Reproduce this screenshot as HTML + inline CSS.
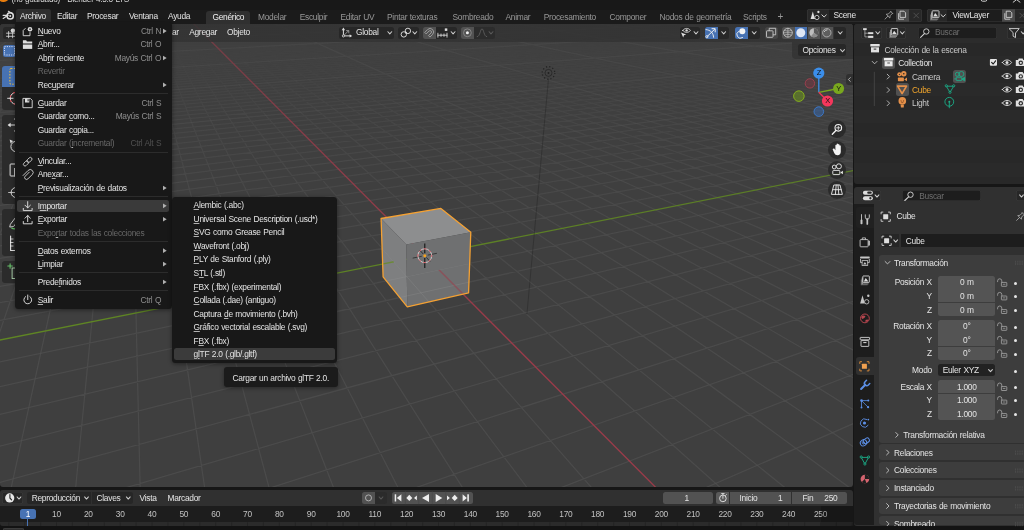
<!DOCTYPE html>
<html><head><meta charset="utf-8"><title>Blender</title>
<style>
html,body{margin:0;padding:0;background:#161616}
body{width:1024px;height:530px;overflow:hidden;position:relative;font-family:"Liberation Sans",sans-serif;font-size:8.4px;letter-spacing:-0.28px;word-spacing:0.5px;color:#e4e4e4}
#w{position:absolute;left:0;top:0;width:1024px;height:530px;will-change:transform}
.a{position:absolute}
.t{position:absolute;white-space:nowrap;line-height:10px;height:10px}
.d{color:#686868}
.s{color:#8e8e8e}
u{text-decoration:underline;text-decoration-thickness:0.6px;text-underline-offset:1.2px;text-decoration-color:rgba(228,228,228,0.75)}
svg{position:absolute;overflow:visible}
</style></head><body><div id="w">
<div class="a" style="left:0.00px;top:0.00px;width:1024.00px;height:24.00px;background:#181818;"></div><div class="a" style="left:0.00px;top:10.00px;width:1024.00px;height:14.00px;background:#1b1b1b;"></div><div class="a" style="left:0;top:0;width:1024px;height:6px;overflow:hidden"><span class="t" style="left:11.6px;top:-4.7px;font-size:8.2px;color:#d4d4d4">(no guardado) - Blender 4.5.3 LTS</span><div class="a" style="left:-2px;top:-8.3px;width:10.6px;height:10.6px;border-radius:5.3px;background:#e87d0d"></div></div><div class="a" style="left:16.25px;top:9.25px;width:35.00px;height:12.65px;background:#2e2e2e;border-radius:2.5px 2.5px 0 0;"></div><span class="t" style="left:20.00px;top:10.55px;">Archivo</span><span class="t" style="left:57.00px;top:10.55px;">Editar</span><span class="t" style="left:87.00px;top:10.55px;">Procesar</span><span class="t" style="left:129.00px;top:10.55px;">Ventana</span><span class="t" style="left:168.00px;top:10.55px;">Ayuda</span><div class="a" style="left:206.00px;top:10.50px;width:44.00px;height:14.00px;background:#303030;border-radius:3px 3px 0 0;"></div><span class="t" style="left:212.50px;top:11.55px;color:#f0f0f0">Genérico</span><span class="t" style="left:258.00px;top:11.55px;color:#989898">Modelar</span><span class="t" style="left:299.75px;top:11.55px;color:#989898">Esculpir</span><span class="t" style="left:340.50px;top:11.55px;color:#989898">Editar UV</span><span class="t" style="left:387.00px;top:11.55px;color:#989898">Pintar texturas</span><span class="t" style="left:452.50px;top:11.55px;color:#989898">Sombreado</span><span class="t" style="left:505.50px;top:11.55px;color:#989898">Animar</span><span class="t" style="left:543.75px;top:11.55px;color:#989898">Procesamiento</span><span class="t" style="left:609.50px;top:11.55px;color:#989898">Componer</span><span class="t" style="left:659.50px;top:11.55px;color:#989898">Nodos de geometría</span><span class="t" style="left:743.00px;top:11.55px;color:#989898">Scripts</span><span class="t" style="left:777.50px;top:11.75px;color:#989898;font-size:10px">+</span><div class="a" style="left:806.75px;top:9.00px;width:22.25px;height:12.50px;background:#282828;border-radius:2.5px 0 0 2.5px;"></div><div class="a" style="left:829.40px;top:9.00px;width:65.80px;height:12.50px;background:#1d1d1d;"></div><span class="t" style="left:833.50px;top:10.15px;">Scene</span><div class="a" style="left:895.60px;top:9.00px;width:13.20px;height:12.50px;background:#4a4a4a;"></div><div class="a" style="left:909.20px;top:9.00px;width:12.55px;height:12.50px;background:#282828;border-radius:0 2.5px 2.5px 0;"></div><div class="a" style="left:926.75px;top:9.00px;width:20.25px;height:12.50px;background:#282828;border-radius:2.5px 0 0 2.5px;"></div><div class="a" style="left:947.40px;top:9.00px;width:54.00px;height:12.50px;background:#1d1d1d;"></div><span class="t" style="left:952.50px;top:10.15px;">ViewLayer</span><div class="a" style="left:1001.80px;top:9.00px;width:13.20px;height:12.50px;background:#4a4a4a;"></div><div class="a" style="left:1015.40px;top:9.00px;width:14.60px;height:12.50px;background:#282828;"></div><div class="a" style="left:806.75px;top:9.00px;width:115.00px;height:12.50px;background:transparent;border-radius:2.5px;box-shadow:inset 0 0 0 0.6px #3a3a3a;"></div><div class="a" style="left:926.75px;top:9.00px;width:103.25px;height:12.50px;background:transparent;border-radius:2.5px;box-shadow:inset 0 0 0 0.6px #3a3a3a;"></div><div class="a" style="left:0;top:24px;width:852.7px;height:463px;background:#3f3f3f;border-radius:3px;overflow:hidden"><svg style="left:0;top:0" width="852.7" height="463" viewBox="0 24 852.7 463"><defs><linearGradient id="gf" x1="0" y1="24" x2="0" y2="487" gradientUnits="userSpaceOnUse"><stop offset="0.04" stop-color="#fff" stop-opacity="0.05"/><stop offset="0.1" stop-color="#fff" stop-opacity="0.3"/><stop offset="0.2" stop-color="#fff" stop-opacity="0.6"/><stop offset="0.4" stop-color="#fff" stop-opacity="0.85"/><stop offset="0.7" stop-color="#fff" stop-opacity="1"/></linearGradient><mask id="gm" maskUnits="userSpaceOnUse" x="0" y="24" width="860" height="470"><rect x="0" y="24" width="860" height="470" fill="url(#gf)"/></mask><linearGradient id="gf2" x1="0" y1="24" x2="0" y2="487" gradientUnits="userSpaceOnUse"><stop offset="0" stop-color="#fff" stop-opacity="0.55"/><stop offset="0.3" stop-color="#fff" stop-opacity="0.85"/><stop offset="0.6" stop-color="#fff" stop-opacity="1"/></linearGradient><mask id="gm2" maskUnits="userSpaceOnUse" x="0" y="24" width="860" height="470"><rect x="0" y="24" width="860" height="470" fill="url(#gf2)"/></mask></defs><g mask="url(#gm)" fill="none"><path d="M-918.0 28.0L657.1 -11.1M-893.6 26.9L-131642.5 8927.3M-929.3 28.8L659.6 -10.9M-880.4 26.6L-130551.7 8927.3M-940.9 29.5L662.2 -10.8M-867.4 26.3L-129460.9 8927.3M-952.8 30.3L664.8 -10.6M-854.4 26.0L-128370.2 8927.3M-964.9 31.2L667.4 -10.5M-841.6 25.6L-127279.4 8927.3M-977.3 32.0L670.1 -10.3M-828.9 25.3L-126188.6 8927.3M-989.9 32.9L672.8 -10.1M-816.3 25.0L-125097.9 8927.3M-1002.9 33.7L675.5 -10.0M-803.8 24.7L-124007.1 8927.3M-1016.1 34.6L678.2 -9.8M-791.4 24.4L-122916.3 8927.3M-1043.6 36.5L683.7 -9.5M-767.1 23.8L-120734.8 8927.3M-1057.9 37.4L686.5 -9.3M-755.0 23.5L-119644.0 8927.3M-1072.4 38.4L689.4 -9.2M-743.1 23.2L-118553.2 8927.3M-1087.4 39.4L692.2 -9.0M-731.3 22.9L-117462.5 8927.3M-1102.7 40.5L695.1 -8.8M-719.6 22.6L-116371.7 8927.3M-1118.5 41.5L698.1 -8.6M-707.9 22.3L-115280.9 8927.3M-1134.6 42.6L701.0 -8.5M-696.4 22.1L-114190.2 8927.3M-1151.1 43.7L704.0 -8.3M-685.0 21.8L-113099.4 8927.3M-1168.1 44.9L707.0 -8.1M-673.7 21.5L-112008.6 8927.3M-1203.5 47.3L713.2 -7.7M-651.4 21.0L-109827.1 8927.3M-1221.9 48.5L716.3 -7.6M-640.3 20.7L-108736.3 8927.3M-1240.9 49.8L719.4 -7.4M-629.4 20.4L-107645.6 8927.3M-1260.4 51.1L722.6 -7.2M-618.6 20.1L-106554.8 8927.3M-1280.4 52.5L725.8 -7.0M-607.8 19.9L-105464.0 8927.3M-1301.0 53.9L729.1 -6.8M-597.2 19.6L-104373.3 8927.3M-1322.3 55.3L732.4 -6.6M-586.6 19.4L-103282.5 8927.3M-1344.2 56.8L735.7 -6.4M-576.1 19.1L-102191.7 8927.3M-1366.7 58.3L739.1 -6.2M-565.7 18.8L-101101.0 8927.3M-1414.0 61.5L745.9 -5.8M-545.2 18.3L-98919.4 8927.3M-1438.7 63.2L749.4 -5.6M-535.1 18.1L-97828.6 8927.3M-1464.3 64.9L752.9 -5.4M-525.0 17.8L-96737.9 8927.3M-1490.7 66.7L756.4 -5.2M-515.0 17.6L-95647.1 8927.3M-1518.0 68.5L760.0 -5.0M-505.1 17.3L-94556.3 8927.3M-1546.3 70.4L763.7 -4.7M-495.3 17.1L-93465.6 8927.3M-1575.5 72.4L767.4 -4.5M-485.6 16.9L-92374.8 8927.3M-1605.8 74.4L771.1 -4.3M-475.9 16.6L-91284.0 8927.3M-1637.2 76.6L774.8 -4.1M-466.4 16.4L-90193.3 8927.3M-1703.5 81.0L782.5 -3.6M-447.4 15.9L-88011.7 8927.3M-1738.5 83.4L786.4 -3.4M-438.1 15.7L-86921.0 8927.3M-1774.9 85.9L790.4 -3.2M-428.8 15.5L-85830.2 8927.3M-1812.8 88.4L794.4 -2.9M-419.6 15.2L-84739.4 8927.3M-1852.2 91.1L798.4 -2.7M-410.5 15.0L-83648.7 8927.3M-1893.2 93.8L802.5 -2.4M-401.4 14.8L-82557.9 8927.3M-1936.0 96.7L806.6 -2.2M-392.4 14.6L-81467.1 8927.3M-1980.6 99.7L810.8 -1.9M-383.5 14.4L-80376.4 8927.3M-2027.2 102.9L815.1 -1.7M-374.6 14.1L-79285.6 8927.3M-2126.9 109.6L823.7 -1.2M-357.1 13.7L-77104.1 8927.3M-2180.2 113.2L828.1 -0.9M-348.5 13.5L-76013.3 8927.3M-2236.2 117.0L832.6 -0.6M-339.9 13.3L-74922.5 8927.3M-2294.9 121.0L837.1 -0.4M-331.3 13.1L-73831.7 8927.3M-2356.7 125.1L841.7 -0.1M-322.9 12.9L-72741.0 8927.3M-2421.6 129.5L846.4 0.2M-314.5 12.6L-71650.2 8927.3M-2490.0 134.1L851.1 0.5M-306.1 12.4L-70559.4 8927.3M-2562.3 139.0L855.8 0.7M-297.9 12.2L-69468.7 8927.3M-2638.6 144.2L860.6 1.0M-289.7 12.0L-68377.9 8927.3M-2805.0 155.4L870.5 1.6M-273.4 11.6L-66196.4 8927.3M-2895.9 161.5L875.5 1.9M-265.4 11.4L-65105.6 8927.3M-2992.7 168.1L880.6 2.2M-257.4 11.2L-64014.8 8927.3M-3095.9 175.0L885.8 2.5M-249.5 11.0L-62924.1 8927.3M-3206.1 182.5L891.0 2.8M-241.6 10.9L-61833.3 8927.3M-3324.1 190.4L896.3 3.2M-233.8 10.7L-60742.5 8927.3M-3450.8 199.0L901.7 3.5M-226.1 10.5L-59651.8 8927.3M-3587.1 208.2L907.1 3.8M-218.4 10.3L-58561.0 8927.3M-3734.2 218.1L912.7 4.1M-210.7 10.1L-57470.2 8927.3M-4066.5 240.6L924.0 4.8M-195.6 9.7L-55288.7 8927.3M-4255.0 253.3L929.8 5.1M-188.1 9.5L-54197.9 8927.3M-4461.3 267.2L935.6 5.5M-180.7 9.4L-53107.1 8927.3M-4688.0 282.5L941.6 5.8M-173.3 9.2L-52016.4 8927.3M-4938.2 299.4L947.6 6.2M-166.0 9.0L-50925.6 8927.3M-5215.8 318.2L953.7 6.6M-158.8 8.8L-49834.8 8927.3M-5525.6 339.1L959.9 6.9M-151.5 8.6L-48744.1 8927.3M-5873.6 362.6L966.2 7.3M-144.4 8.5L-47653.3 8927.3M-6267.2 389.1L972.7 7.7M-137.2 8.3L-46562.5 8927.3M-7232.7 454.3L985.8 8.5M-123.1 7.9L-44381.0 8927.3M-7833.7 494.9L992.5 8.9M-116.2 7.8L-43290.2 8927.3M-8541.7 542.7L999.3 9.3M-109.2 7.6L-42199.5 8927.3M-9387.7 599.8L1006.2 9.7M-102.4 7.4L-41108.7 8927.3M-10416.8 669.3L1013.3 10.1M-95.5 7.3L-40017.9 8927.3M-11695.5 755.6L1020.4 10.5M-88.7 7.1L-38927.2 8927.3M-13327.1 865.8L1027.7 11.0M-82.0 6.9L-37836.4 8927.3M-15481.2 1011.2L1035.0 11.4M-75.3 6.8L-36745.6 8927.3M-18456.4 1212.1L1042.6 11.9M-68.6 6.6L-35654.9 8927.3M-29905.8 1985.1L1057.9 12.8M-55.5 6.3L-33473.3 8927.3M-43276.2 2887.7L1065.8 13.2M-48.9 6.1L-32382.6 8927.3M-78103.2 5239.0L1073.9 13.7M-42.4 5.9L-31291.8 8927.3M-131537.6 8927.3L1082.0 14.2M-36.0 5.8L-30201.0 8927.3M-129085.3 8927.3L1090.3 14.7M-29.6 5.6L-29110.2 8927.3M-126633.0 8927.3L1098.8 15.2M-23.3 5.5L-28019.5 8927.3M-124180.7 8927.3L1107.4 15.7M-16.9 5.3L-26928.7 8927.3M-121728.5 8927.3L1116.2 16.2M-10.7 5.2L-25837.9 8927.3M-119276.2 8927.3L1125.1 16.8M-4.4 5.0L-24747.2 8927.3M-114371.6 8927.3L1143.4 17.9M7.9 4.7L-22565.6 8927.3M-111919.3 8927.3L1152.8 18.4M14.0 4.6L-21474.9 8927.3M-109467.0 8927.3L1162.4 19.0M20.1 4.4L-20384.1 8927.3M-107014.7 8927.3L1172.2 19.6M26.1 4.3L-19293.3 8927.3M-104562.5 8927.3L1182.1 20.2M32.1 4.1L-18202.6 8927.3M-102110.2 8927.3L1192.3 20.8M38.1 4.0L-17111.8 8927.3M-99657.9 8927.3L1202.6 21.4M44.0 3.8L-16021.0 8927.3M-97205.6 8927.3L1213.2 22.0M49.9 3.7L-14930.3 8927.3M-94753.3 8927.3L1223.9 22.6M55.8 3.5L-13839.5 8927.3M-89848.8 8927.3L1246.1 24.0M67.4 3.2L-11658.0 8927.3M-87396.5 8927.3L1257.5 24.6M73.1 3.1L-10567.2 8927.3M-84944.2 8927.3L1269.2 25.3M78.8 3.0L-9476.4 8927.3M-82491.9 8927.3L1281.1 26.1M84.5 2.8L-8385.6 8927.3M-80039.6 8927.3L1293.3 26.8M90.1 2.7L-7294.9 8927.3M-77587.3 8927.3L1305.7 27.5M95.7 2.5L-6204.1 8927.3M-75135.0 8927.3L1318.4 28.3M101.3 2.4L-5113.3 8927.3M-72682.8 8927.3L1331.3 29.0M106.8 2.3L-4022.6 8927.3M-70230.5 8927.3L1344.6 29.8M112.3 2.1L-2931.8 8927.3M-65325.9 8927.3L1371.9 31.5M123.2 1.9L-750.3 8927.3M-62873.6 8927.3L1386.1 32.3M128.6 1.7L340.5 8927.3M-60421.3 8927.3L1400.6 33.2M134.0 1.6L1431.3 8927.3M-57969.0 8927.3L1415.4 34.0M139.3 1.5L2522.0 8927.3M-55516.8 8927.3L1430.6 34.9M144.6 1.3L3612.8 8927.3M-53064.5 8927.3L1446.1 35.9M149.9 1.2L4703.6 8927.3M-50612.2 8927.3L1462.0 36.8M155.2 1.1L5794.3 8927.3M-48159.9 8927.3L1478.3 37.8M160.4 0.9L6885.1 8927.3M-45707.6 8927.3L1495.0 38.8M165.6 0.8L7975.9 8927.3M-40803.0 8927.3L1529.7 40.8M175.8 0.6L10157.4 8927.3M-38350.8 8927.3L1547.7 41.9M180.9 0.4L11248.2 8927.3M-35898.5 8927.3L1566.1 43.0M186.0 0.3L12339.0 8927.3M-33446.2 8927.3L1585.1 44.1M191.0 0.2L13429.7 8927.3M-30993.9 8927.3L1604.5 45.3M196.0 0.1L14520.5 8927.3M-28541.6 8927.3L1624.5 46.5M201.0 -0.1L15611.3 8927.3M-26089.3 8927.3L1645.1 47.7M205.9 -0.2L16702.0 8927.3M-23637.0 8927.3L1666.2 49.0M210.9 -0.3L17792.8 8927.3M-21184.8 8927.3L1687.9 50.3M215.8 -0.4L18883.6 8927.3M-16280.2 8927.3L1733.2 53.0M225.5 -0.7L21065.1 8927.3M-13827.9 8927.3L1756.8 54.4M230.3 -0.8L22155.9 8927.3M-11375.6 8927.3L1781.2 55.8M235.0 -0.9L23246.6 8927.3M-8923.3 8927.3L1806.3 57.3M239.8 -1.0L24337.4 8927.3M-6471.0 8927.3L1832.1 58.8M244.5 -1.1L25428.2 8927.3M-4018.8 8927.3L1858.8 60.4M249.2 -1.2L26518.9 8927.3M-1566.5 8927.3L1886.4 62.1M253.9 -1.4L27609.7 8927.3M885.8 8927.3L1914.8 63.8M258.6 -1.5L28700.5 8927.3M3338.1 8927.3L1944.1 65.5M263.2 -1.6L29791.2 8927.3M8242.7 8927.3L2005.8 69.2M272.3 -1.8L31972.8 8927.3M10695.0 8927.3L2038.3 71.1M276.9 -1.9L33063.5 8927.3M13147.2 8927.3L2071.8 73.1M281.4 -2.0L34154.3 8927.3M15599.5 8927.3L2106.6 75.2M285.9 -2.1L35245.1 8927.3M18051.8 8927.3L2142.7 77.3M290.4 -2.3L36335.9 8927.3M20504.1 8927.3L2180.1 79.5M294.8 -2.4L37426.6 8927.3M22956.4 8927.3L2218.9 81.9M299.3 -2.5L38517.4 8927.3M25408.7 8927.3L2259.2 84.3M303.7 -2.6L39608.2 8927.3M27861.0 8927.3L2301.1 86.7M308.0 -2.7L40698.9 8927.3M32765.5 8927.3L2390.0 92.0M316.7 -2.9L42880.5 8927.3M35217.8 8927.3L2437.2 94.8M321.0 -3.0L43971.2 8927.3M37670.1 8927.3L2486.4 97.8M325.3 -3.1L45062.0 8927.3M40122.4 8927.3L2537.8 100.8M329.6 -3.2L46152.8 8927.3M42574.7 8927.3L2591.5 104.0M333.8 -3.3L47243.5 8927.3M45027.0 8927.3L2647.7 107.4M338.0 -3.4L48334.3 8927.3M47479.2 8927.3L2706.4 110.9M342.2 -3.5L49425.1 8927.3M49931.5 8927.3L2768.0 114.5M346.4 -3.6L50515.8 8927.3M52383.8 8927.3L2832.5 118.4M350.5 -3.7L51606.6 8927.3M57288.4 8927.3L2971.6 126.6M358.8 -3.9L53788.1 8927.3M59740.7 8927.3L3046.7 131.1M362.9 -4.0L54878.9 8927.3M62192.9 8927.3L3125.8 135.8M366.9 -4.1L55969.7 8927.3M64645.2 8927.3L3209.4 140.8M371.0 -4.2L57060.5 8927.3M67097.5 8927.3L3297.7 146.0M375.0 -4.3L58151.2 8927.3M69549.8 8927.3L3391.2 151.6M379.0 -4.4L59242.0 8927.3M72002.1 8927.3L3490.4 157.5M383.0 -4.5L60332.8 8927.3M74454.4 8927.3L3595.9 163.8M386.9 -4.6L61423.5 8927.3M76906.7 8927.3L3708.1 170.5M390.9 -4.7L62514.3 8927.3M81811.2 8927.3L3956.0 185.2M398.7 -4.9L64695.8 8927.3M84263.5 8927.3L4093.2 193.4M402.6 -5.0L65786.6 8927.3M86715.8 8927.3L4240.7 202.2M406.4 -5.1L66877.4 8927.3M89168.1 8927.3L4399.5 211.6M410.3 -5.2L67968.1 8927.3M91620.4 8927.3L4571.2 221.8M414.1 -5.3L69058.9 8927.3M94072.7 8927.3L4757.1 232.9M417.9 -5.4L70149.7 8927.3M96524.9 8927.3L4959.3 244.9M421.7 -5.5L71240.4 8927.3M98977.2 8927.3L5180.0 258.1M425.5 -5.6L72331.2 8927.3M101429.5 8927.3L5421.9 272.5M429.2 -5.7L73422.0 8927.3M106334.1 8927.3L5982.3 305.8M436.6 -5.9L75603.5 8927.3M108786.4 8927.3L6309.5 325.3M440.3 -6.0L76694.3 8927.3M111238.7 8927.3L6675.4 347.0M444.0 -6.0L77785.0 8927.3M113690.9 8927.3L7087.4 371.6M447.7 -6.1L78875.8 8927.3M116143.2 8927.3L7554.7 399.4M451.3 -6.2L79966.6 8927.3M118595.5 8927.3L8089.3 431.2M454.9 -6.3L81057.4 8927.3M121047.8 8927.3L8706.8 467.9M458.5 -6.4L82148.1 8927.3M123500.1 8927.3L9428.2 510.9M462.1 -6.5L83238.9 8927.3M125952.4 8927.3L10282.0 561.7M465.7 -6.6L84329.7 8927.3M130856.9 8927.3L12565.6 697.5M472.7 -6.8L86511.2 8927.3M133309.2 8927.3L14141.3 791.3M476.3 -6.8L87602.0 8927.3M135761.5 8927.3L16174.2 912.3M479.7 -6.9L88692.7 8927.3M138213.8 8927.3L18897.0 1074.3M483.2 -7.0L89783.5 8927.3M140666.1 8927.3L22732.7 1302.5M486.7 -7.1L90874.3 8927.3M143118.4 8927.3L28538.8 1648.0M490.1 -7.2L91965.0 8927.3M145570.7 8927.3L38358.1 2232.4M493.6 -7.3L93055.8 8927.3M148022.9 8927.3L58549.7 3433.9M497.0 -7.3L94146.6 8927.3M150475.2 8927.3L123943.6 7325.2M500.4 -7.4L95237.3 8927.3M507.1 -7.6L97418.9 8927.3M510.5 -7.7L98509.6 8927.3M513.8 -7.8L99600.4 8927.3M517.1 -7.8L100691.2 8927.3M520.4 -7.9L101782.0 8927.3M523.7 -8.0L102872.7 8927.3M527.0 -8.1L103963.5 8927.3M530.3 -8.2L105054.3 8927.3M533.5 -8.2L106145.0 8927.3M539.9 -8.4L108326.6 8927.3M543.1 -8.5L109417.3 8927.3M546.3 -8.6L110508.1 8927.3M549.5 -8.6L111598.9 8927.3M552.6 -8.7L112689.6 8927.3M555.8 -8.8L113780.4 8927.3M558.9 -8.9L114871.2 8927.3M562.0 -9.0L115961.9 8927.3M565.1 -9.0L117052.7 8927.3M571.3 -9.2L119234.2 8927.3M574.3 -9.3L120325.0 8927.3M577.3 -9.3L121415.8 8927.3M580.4 -9.4L122506.5 8927.3M583.4 -9.5L123597.3 8927.3M586.4 -9.6L124688.1 8927.3M589.4 -9.6L125778.9 8927.3M592.3 -9.7L126869.6 8927.3M595.3 -9.8L127960.4 8927.3M601.2 -9.9L130141.9 8927.3M604.1 -10.0L131232.7 8927.3M607.0 -10.1L132323.5 8927.3M609.9 -10.1L133414.2 8927.3M612.8 -10.2L134505.0 8927.3M615.7 -10.3L135595.8 8927.3M618.5 -10.3L136686.5 8927.3M621.4 -10.4L137777.3 8927.3M624.2 -10.5L138868.1 8927.3M629.8 -10.6L141049.6 8927.3M632.6 -10.7L142140.4 8927.3M635.4 -10.8L143231.1 8927.3M638.2 -10.8L144321.9 8927.3M641.0 -10.9L145412.7 8927.3M643.7 -11.0L146503.5 8927.3M646.4 -11.0L147594.2 8927.3M649.2 -11.1L148685.0 8927.3M651.9 -11.2L149775.8 8927.3" stroke="#535353" stroke-width="1.25" stroke-opacity="0.62"/></g><g mask="url(#gm2)" fill="none"><path d="M-906.9 27.2L654.6 -11.2M-906.9 27.2L-132733.2 8927.3M-1029.7 35.5L680.9 -9.7M-779.2 24.1L-121825.6 8927.3M-1185.6 46.1L710.1 -7.9M-662.5 21.2L-110917.9 8927.3M-1390.0 59.9L742.5 -6.0M-555.4 18.6L-100010.2 8927.3M-1669.7 78.7L778.7 -3.8M-456.9 16.2L-89102.5 8927.3M-2075.9 106.2L819.4 -1.4M-365.8 13.9L-78194.8 8927.3M-2719.4 149.6L865.5 1.3M-281.5 11.8L-67287.1 8927.3M-3893.5 228.9L918.3 4.5M-203.2 9.9L-56379.5 8927.3M-6716.1 419.4L979.2 8.1M-130.2 8.1L-45471.8 8927.3M-22832.9 1507.5L1050.2 12.3M-62.0 6.4L-34564.1 8927.3M-116823.9 8927.3L1134.1 17.3M1.8 4.9L-23656.4 8927.3M-92301.0 8927.3L1234.9 23.3M61.6 3.4L-12748.7 8927.3M-67778.2 8927.3L1358.1 30.6M117.8 2.0L-1841.0 8927.3M-18732.5 8927.3L1710.2 51.6M220.6 -0.5L19974.3 8927.3M5790.4 8927.3L1974.4 67.3M267.8 -1.7L30882.0 8927.3M30313.2 8927.3L2344.6 89.3M312.4 -2.8L41789.7 8927.3M54836.1 8927.3L2900.4 122.4M354.7 -3.8L52697.4 8927.3M79358.9 8927.3L3827.9 177.6M394.8 -4.8L63605.1 8927.3M103881.8 8927.3L5688.0 288.3M432.9 -5.8L74512.7 8927.3M128404.7 8927.3L11308.4 622.7M469.2 -6.7L85420.4 8927.3M503.8 -7.5L96328.1 8927.3M536.7 -8.3L107235.8 8927.3M568.2 -9.1L118143.5 8927.3M598.3 -9.8L129051.2 8927.3M627.0 -10.6L139958.8 8927.3M654.6 -11.2L150866.5 8927.3" stroke="#535353" stroke-width="1.25" stroke-opacity="0.62"/><path d="M170.7 0.7L9066.6 8927.3" stroke="#9a3c4a" stroke-width="1.35"/><path d="M-43255.3 8927.3L1512.1 39.8" stroke="#5f8524" stroke-width="1.25"/></g><path d="M548.5 78.9L526.9 314.3" stroke="#141414" stroke-width="0.9" stroke-opacity="0.3"/><circle cx="548.5" cy="72.9" r="6.3" fill="none" stroke="#141414" stroke-width="1.3" stroke-dasharray="1.1 2.2" stroke-opacity="0.7"/><circle cx="548.5" cy="72.9" r="3.5" fill="none" stroke="#141414" stroke-width="0.8" stroke-opacity="0.6"/><circle cx="548.5" cy="72.9" r="1" fill="#141414" fill-opacity="0.7"/><polygon points="381.1,218.5 440.9,208.4 470.8,232.3 406.3,244.5" fill="#8d8e8f" /><polygon points="381.1,218.5 406.3,244.5 407.3,306.9 383.1,276.8" fill="#7e7f80" /><polygon points="406.3,244.5 470.8,232.3 468.6,292.8 407.3,306.9" fill="#6f7071" /><clipPath id="cc"><polygon points="406.8,276.5 469.7,263.4 468.6,292.8 407.3,306.9 383.1,276.8 382.1,248.3"/></clipPath><g clip-path="url(#cc)" fill="none"><path d="M-6.4 247.0L611.4 154.4M183.5 167.0L365.0 846.8M-12.6 260.3L626.4 160.5M207.9 164.1L453.5 796.4M-19.3 274.9L642.3 167.0M231.6 161.3L532.6 751.4M-26.8 291.0L659.2 173.9M254.6 158.5L603.6 710.9M-35.0 308.8L677.3 181.2M277.0 155.8L667.7 674.4M-44.2 328.6L696.6 189.1M298.8 153.2L725.9 641.3M-66.0 375.8L739.7 206.7M340.8 148.1L827.6 583.4M-79.2 404.2L763.8 216.5M361.0 145.7L872.2 558.0M-94.2 436.7L789.9 227.1M380.7 143.3L913.3 534.6M-111.6 474.4L818.2 238.6M399.9 141.0L951.4 512.9M-132.0 518.5L849.0 251.2M418.6 138.8L986.7 492.8M-156.2 570.7L882.7 264.9M436.8 136.6L1019.5 474.1M-185.4 633.7L919.7 280.0M454.7 134.4L1050.1 456.7M-221.2 711.2L960.5 296.6M472.1 132.3L1078.8 440.4M-266.3 808.7L1005.7 315.0M489.1 130.3L1105.6 425.1M-324.8 935.1L1056.2 335.5M505.7 128.3L1130.8 410.8M-403.7 1105.7L1112.8 358.6M521.9 126.3L1154.4 397.3" stroke="#9a9a9a" stroke-width="0.9" stroke-opacity="0.28"/><path d="M438.9 269.8L9066.6 8927.3" stroke="#9d3d4b" stroke-width="1.4" stroke-opacity="0.6"/><path d="M393.9 261.8L-1872.6 711.7" stroke="#668c24" stroke-width="1.4" stroke-opacity="0.8"/></g><polygon points="381.1,218.5 440.9,208.4 470.8,232.3 468.6,292.8 407.3,306.9 383.1,276.8" fill="none" stroke="#f4a133" stroke-width="1.3" stroke-linejoin="round"/><g transform="translate(424.8 255.7)"><path d="M0 -12.2V-2.4M0 2.4V12.2" stroke="#151515" stroke-width="1.1"/><path d="M-12.1 2.4L-3 0.6M3 -0.6L12.1 -2.4" stroke="#1c1c1c" stroke-width="0.9" stroke-opacity="0.75"/><path d="M-5 -5.6L-1.6 -1.7M1.6 1.7L5.2 5.8" stroke="#1c1c1c" stroke-width="0.9" stroke-opacity="0.85"/><circle r="6.9" fill="none" stroke="#e8e8e8" stroke-width="1" stroke-opacity="0.8"/><circle r="6.9" fill="none" stroke="#d8444d" stroke-width="1" stroke-dasharray="2.71 2.71" stroke-dashoffset="1.3" stroke-opacity="0.9"/><circle r="1.5" fill="#f5a21e"/></g></svg></div><div class="a" style="left:0.00px;top:24.00px;width:852.70px;height:18.40px;background:rgba(50,50,50,0.8);border-radius:3px 3px 0 0;"></div><div class="a" style="left:792.20px;top:42.40px;width:60.50px;height:16.20px;background:rgba(50,50,50,0.8);border-radius:0 0 0 4px;"></div><div class="a" style="left:2.60px;top:26.50px;width:19.40px;height:12.10px;background:#272727;border-radius:2.5px;"></div><div class="a" style="left:26.00px;top:26.50px;width:60.00px;height:12.10px;background:#272727;border-radius:2.5px;"></div><span class="t" style="left:40.00px;top:27.45px;">Modo Objeto</span><span class="t" style="left:92.00px;top:27.45px;">Vista</span><span class="t" style="left:114.00px;top:27.45px;left:138.2px">Seleccionar</span><span class="t" style="left:189.20px;top:27.45px;">Agregar</span><span class="t" style="left:227.00px;top:27.45px;">Objeto</span><div class="a" style="left:339.00px;top:26.50px;width:54.50px;height:12.10px;background:#272727;border-radius:2.5px;"></div><span class="t" style="left:356.00px;top:27.45px;">Global</span><svg style="left:0;top:0" width="1" height="1"><path d="M387.90 31.75L389.80 33.85L391.70 31.75" fill="none" stroke="#cecece" stroke-width="1.05" stroke-linecap="round" stroke-linejoin="round"/></svg><div class="a" style="left:398.30px;top:26.50px;width:20.50px;height:12.10px;background:#272727;border-radius:2.5px;"></div><svg style="left:0;top:0" width="1" height="1"><path d="M412.90 31.75L414.80 33.85L416.70 31.75" fill="none" stroke="#cecece" stroke-width="1.05" stroke-linecap="round" stroke-linejoin="round"/></svg><div class="a" style="left:423.30px;top:26.50px;width:12.70px;height:12.10px;background:#525252;border-radius:2.5px 0 0 2.5px;"></div><div class="a" style="left:436.40px;top:26.50px;width:20.60px;height:12.10px;background:#272727;border-radius:0 2.5px 2.5px 0;"></div><svg style="left:0;top:0" width="1" height="1"><path d="M451.20 31.75L453.10 33.85L455.00 31.75" fill="none" stroke="#cecece" stroke-width="1.05" stroke-linecap="round" stroke-linejoin="round"/></svg><div class="a" style="left:461.20px;top:26.50px;width:12.70px;height:12.10px;background:#525252;border-radius:2.5px 0 0 2.5px;"></div><div class="a" style="left:474.30px;top:26.50px;width:21.00px;height:12.10px;background:#2c2c2c;border-radius:0 2.5px 2.5px 0;"></div><svg style="left:0;top:0" width="1" height="1"><path d="M489.10 31.75L491.00 33.85L492.90 31.75" fill="none" stroke="#5a5a5a" stroke-width="1.05" stroke-linecap="round" stroke-linejoin="round"/></svg><div class="a" style="left:680.00px;top:26.50px;width:20.00px;height:12.10px;background:#272727;border-radius:2.5px;"></div><svg style="left:0;top:0" width="1" height="1"><path d="M694.10 31.75L696.00 33.85L697.90 31.75" fill="none" stroke="#cecece" stroke-width="1.05" stroke-linecap="round" stroke-linejoin="round"/></svg><div class="a" style="left:704.50px;top:26.50px;width:13.00px;height:12.10px;background:#4772b3;border-radius:2.5px 0 0 2.5px;"></div><div class="a" style="left:717.90px;top:26.50px;width:11.60px;height:12.10px;background:#272727;border-radius:0 2.5px 2.5px 0;"></div><svg style="left:0;top:0" width="1" height="1"><path d="M721.80 31.75L723.70 33.85L725.60 31.75" fill="none" stroke="#cecece" stroke-width="1.05" stroke-linecap="round" stroke-linejoin="round"/></svg><div class="a" style="left:735.00px;top:26.50px;width:12.50px;height:12.10px;background:#4772b3;border-radius:2.5px 0 0 2.5px;"></div><div class="a" style="left:747.90px;top:26.50px;width:12.50px;height:12.10px;background:#272727;border-radius:0 2.5px 2.5px 0;"></div><svg style="left:0;top:0" width="1" height="1"><path d="M752.30 31.75L754.20 33.85L756.10 31.75" fill="none" stroke="#cecece" stroke-width="1.05" stroke-linecap="round" stroke-linejoin="round"/></svg><div class="a" style="left:765.40px;top:26.50px;width:12.20px;height:12.10px;background:#454545;border-radius:2.5px;"></div><div class="a" style="left:782.00px;top:26.50px;width:12.70px;height:12.10px;background:#525252;border-radius:2.5px 0 0 2.5px;"></div><div class="a" style="left:795.00px;top:26.50px;width:12.30px;height:12.10px;background:#4772b3;"></div><div class="a" style="left:807.60px;top:26.50px;width:12.70px;height:12.10px;background:#525252;"></div><div class="a" style="left:820.60px;top:26.50px;width:12.90px;height:12.10px;background:#525252;"></div><div class="a" style="left:833.90px;top:26.50px;width:12.60px;height:12.10px;background:#272727;border-radius:0 2.5px 2.5px 0;"></div><svg style="left:0;top:0" width="1" height="1"><path d="M838.30 31.75L840.20 33.85L842.10 31.75" fill="none" stroke="#cecece" stroke-width="1.05" stroke-linecap="round" stroke-linejoin="round"/></svg><div class="a" style="left:798.10px;top:44.40px;width:48.30px;height:11.80px;background:#272727;border-radius:2.5px;"></div><span class="t" style="left:802.50px;top:45.25px;">Opciones</span><svg style="left:0;top:0" width="1" height="1"><path d="M840.60 49.65L842.50 51.75L844.40 49.65" fill="none" stroke="#cecece" stroke-width="1.05" stroke-linecap="round" stroke-linejoin="round"/></svg><div class="a" style="left:846.40px;top:73.90px;width:6.30px;height:11.30px;background:#303030;border-radius:3px 0 0 3px;"></div><svg style="left:0;top:0" width="1" height="1"><path d="M850.6 77.3L848.4 79.5L850.6 81.7" fill="none" stroke="#bbb" stroke-width="0.9"/></svg><div class="a" style="left:2.60px;top:44.60px;width:13.90px;height:12.40px;background:#4772b3;border-radius:2.5px;"></div><div class="a" style="left:2.10px;top:65.70px;width:20.90px;height:21.20px;background:#4772b3;border-radius:3px 3px 0 0;"></div><div class="a" style="left:2.10px;top:86.90px;width:20.90px;height:22.90px;background:#2b2b2b;border-radius:0 0 3px 3px;"></div><div class="a" style="left:2.10px;top:114.50px;width:20.90px;height:89.00px;background:#2b2b2b;border-radius:3px;"></div><div class="a" style="left:2.10px;top:208.50px;width:20.90px;height:47.00px;background:#2b2b2b;border-radius:3px;"></div><div class="a" style="left:2.10px;top:260.50px;width:20.90px;height:22.00px;background:#2b2b2b;border-radius:3px;"></div><svg style="left:0;top:0" width="1" height="1"><circle cx="809.9" cy="83.4" r="4.7" fill="rgba(150,50,65,0.35)" stroke="#a3404f" stroke-width="0.9"/><circle cx="798.9" cy="96.1" r="5.3" fill="rgba(110,150,30,0.55)" stroke="#86b01c" stroke-width="1"/><circle cx="818.8" cy="111.6" r="4.8" fill="rgba(55,110,190,0.45)" stroke="#3a7bd0" stroke-width="0.9"/><path d="M818.8 92.3L818.8 73.1" stroke="#3b8eea" stroke-width="1.3"/><path d="M818.8 92.3L838.6 88.5" stroke="#79a81e" stroke-width="1.3"/><path d="M818.8 92.3L827.5 101" stroke="#f0365a" stroke-width="1.3"/><circle cx="818.8" cy="73.1" r="5.6" fill="#3b8eea" stroke="none" stroke-width="0"/><circle cx="838.6" cy="88.5" r="5.5" fill="#79a81e" stroke="none" stroke-width="0"/><circle cx="827.5" cy="101" r="5.6" fill="#f5375c" stroke="none" stroke-width="0"/></svg><span class="t" style="left:758.80px;width:120px;text-align:center;top:68.35px;color:#101010;font-size:7.5px">Z</span><span class="t" style="left:778.60px;width:120px;text-align:center;top:83.75px;color:#101010;font-size:7.5px">Y</span><span class="t" style="left:767.50px;width:120px;text-align:center;top:96.25px;color:#101010;font-size:7.5px">X</span><div class="a" style="left:828.2px;top:120.3px;width:18px;height:18px;border-radius:9px;background:rgba(38,38,38,0.8)"></div><div class="a" style="left:828.2px;top:140.5px;width:18px;height:18px;border-radius:9px;background:rgba(38,38,38,0.8)"></div><div class="a" style="left:828.2px;top:161.2px;width:18px;height:18px;border-radius:9px;background:rgba(38,38,38,0.8)"></div><div class="a" style="left:828.2px;top:180.9px;width:18px;height:18px;border-radius:9px;background:rgba(38,38,38,0.8)"></div><div class="a" style="left:854.20px;top:24.00px;width:175.80px;height:160.40px;background:#282828;border-radius:3px 0 0 3px;"></div><div class="a" style="left:854.20px;top:24.00px;width:175.80px;height:18.50px;background:#2c2c2c;border-radius:3px 0 0 0;"></div><div class="a" style="left:854.20px;top:56.20px;width:175.80px;height:13.40px;background:#2a2a2a;"></div><div class="a" style="left:854.20px;top:83.00px;width:175.80px;height:13.40px;background:#2a2a2a;"></div><div class="a" style="left:854.20px;top:109.80px;width:175.80px;height:13.40px;background:#2a2a2a;"></div><div class="a" style="left:854.20px;top:136.60px;width:175.80px;height:13.40px;background:#2a2a2a;"></div><div class="a" style="left:854.20px;top:163.40px;width:175.80px;height:13.40px;background:#2a2a2a;"></div><div class="a" style="left:860.50px;top:26.50px;width:21.25px;height:12.10px;background:#272727;border-radius:2.5px;box-shadow:inset 0 0 0 0.6px #3d3d3d;"></div><svg style="left:0;top:0" width="1" height="1"><path d="M875.90 31.75L877.80 33.85L879.70 31.75" fill="none" stroke="#cecece" stroke-width="1.05" stroke-linecap="round" stroke-linejoin="round"/></svg><div class="a" style="left:885.50px;top:26.50px;width:20.75px;height:12.10px;background:#272727;border-radius:2.5px;box-shadow:inset 0 0 0 0.6px #3d3d3d;"></div><svg style="left:0;top:0" width="1" height="1"><path d="M900.40 31.75L902.30 33.85L904.20 31.75" fill="none" stroke="#cecece" stroke-width="1.05" stroke-linecap="round" stroke-linejoin="round"/></svg><div class="a" style="left:917.50px;top:26.50px;width:79.25px;height:12.10px;background:#1d1d1d;border-radius:2.5px;box-shadow:inset 0 0 0 0.6px #3a3a3a;"></div><span class="t" style="left:934.90px;top:27.45px;color:#6e6e6e">Buscar</span><div class="a" style="left:1006.75px;top:26.50px;width:23.25px;height:12.10px;background:#272727;border-radius:2.5px;box-shadow:inset 0 0 0 0.6px #3d3d3d;"></div><svg style="left:0;top:0" width="1" height="1"><path d="M1021.30 31.75L1023.20 33.85L1025.10 31.75" fill="none" stroke="#cecece" stroke-width="1.05" stroke-linecap="round" stroke-linejoin="round"/></svg><span class="t" style="left:884.60px;top:44.55px;color:#c8c8c8">Colección de la escena</span><div class="a" style="left:882.00px;top:56.50px;width:13.30px;height:12.90px;background:#505050;border-radius:2.5px;"></div><span class="t" style="left:898.20px;top:57.95px;">Collection</span><span class="t" style="left:912.00px;top:71.65px;color:#c8c8c8">Camera</span><div class="a" style="left:896.20px;top:83.30px;width:12.80px;height:12.90px;background:#505050;border-radius:2.5px;"></div><span class="t" style="left:912.00px;top:85.05px;color:#f0a52c">Cube</span><span class="t" style="left:912.00px;top:98.35px;color:#c8c8c8">Light</span><div class="a" style="left:952.80px;top:70.00px;width:13.50px;height:13.00px;background:#505050;border-radius:2.5px;"></div><svg style="left:0;top:0" width="1" height="1"><path d="M874.3 71.8V106" stroke="#4a4a4a" stroke-width="0.8"/></svg><svg style="left:0;top:0" width="1" height="1"><path d="M872.20 61.40L874.60 63.80L877.00 61.40" fill="none" stroke="#c0c0c0" stroke-width="0.9" stroke-linecap="round" stroke-linejoin="round"/></svg><svg style="left:0;top:0" width="1" height="1"><path d="M887.20 74.20L889.60 76.60L887.20 79.00" fill="none" stroke="#c0c0c0" stroke-width="0.9" stroke-linecap="round" stroke-linejoin="round"/></svg><svg style="left:0;top:0" width="1" height="1"><path d="M887.20 87.60L889.60 90.00L887.20 92.40" fill="none" stroke="#c0c0c0" stroke-width="0.9" stroke-linecap="round" stroke-linejoin="round"/></svg><svg style="left:0;top:0" width="1" height="1"><path d="M887.20 100.80L889.60 103.20L887.20 105.60" fill="none" stroke="#c0c0c0" stroke-width="0.9" stroke-linecap="round" stroke-linejoin="round"/></svg><div class="a" style="left:854.20px;top:187.00px;width:175.80px;height:338.50px;background:#303030;border-radius:3px 0 0 3px;"></div><div class="a" style="left:854.20px;top:203.70px;width:19.60px;height:321.80px;background:#1d1d1d;border-radius:0 0 0 3px;"></div><div class="a" style="left:861.00px;top:189.75px;width:19.70px;height:11.45px;background:#272727;border-radius:2.5px;box-shadow:inset 0 0 0 0.6px #3d3d3d;"></div><svg style="left:0;top:0" width="1" height="1"><path d="M875.10 194.95L877.00 197.05L878.90 194.95" fill="none" stroke="#cecece" stroke-width="1.05" stroke-linecap="round" stroke-linejoin="round"/></svg><div class="a" style="left:902.00px;top:189.75px;width:78.70px;height:11.45px;background:#1d1d1d;border-radius:2.5px;box-shadow:inset 0 0 0 0.6px #3a3a3a;"></div><span class="t" style="left:919.30px;top:190.55px;color:#6e6e6e">Buscar</span><div class="a" style="left:1016.00px;top:189.75px;width:14.00px;height:11.45px;background:#272727;border-radius:2.5px;box-shadow:inset 0 0 0 0.6px #3d3d3d;"></div><svg style="left:0;top:0" width="1" height="1"><path d="M1019.60 194.95L1021.50 197.05L1023.40 194.95" fill="none" stroke="#cecece" stroke-width="1.05" stroke-linecap="round" stroke-linejoin="round"/></svg><div class="a" style="left:855.70px;top:207.00px;width:18.10px;height:20.60px;background:#212121;border-radius:3px 0 0 3px;"></div><div class="a" style="left:855.70px;top:357.20px;width:18.10px;height:18.30px;background:#303030;border-radius:3px 0 0 3px;"></div><span class="t" style="left:896.60px;top:211.35px;">Cube</span><div class="a" style="left:880.70px;top:234.40px;width:18.80px;height:12.40px;background:#262626;border-radius:2.5px 0 0 2.5px;"></div><svg style="left:0;top:0" width="1" height="1"><path d="M893.80 239.95L895.70 242.05L897.60 239.95" fill="none" stroke="#cecece" stroke-width="1.05" stroke-linecap="round" stroke-linejoin="round"/></svg><div class="a" style="left:900.90px;top:234.40px;width:129.10px;height:12.40px;background:#1d1d1d;"></div><span class="t" style="left:905.80px;top:235.55px;">Cube</span><div class="a" style="left:879.00px;top:254.50px;width:151.00px;height:188.10px;background:#3d3d3d;border-radius:3px 0 0 3px;"></div><svg style="left:0;top:0" width="1" height="1"><path d="M885.10 261.50L887.50 263.90L889.90 261.50" fill="none" stroke="#c8c8c8" stroke-width="0.9" stroke-linecap="round" stroke-linejoin="round"/></svg><span class="t" style="left:894.00px;top:257.55px;">Transformación</span><div class="a" style="left:938.20px;top:275.80px;width:57.10px;height:13.10px;background:#545454;border-radius:2.5px 2.5px 0 0;"></div><span class="t" style="left:906.80px;width:120px;text-align:center;top:277.45px;">0 m</span><span class="t" style="right:92.10px;top:277.35px;">Posición X</span><div class="a" style="left:938.20px;top:289.40px;width:57.10px;height:13.10px;background:#545454;border-radius:0;"></div><span class="t" style="left:906.80px;width:120px;text-align:center;top:291.05px;">0 m</span><span class="t" style="right:92.10px;top:290.95px;">Y</span><div class="a" style="left:938.20px;top:303.00px;width:57.10px;height:13.10px;background:#545454;border-radius:0 0 2.5px 2.5px;"></div><span class="t" style="left:906.80px;width:120px;text-align:center;top:304.65px;">0 m</span><span class="t" style="right:92.10px;top:304.55px;">Z</span><div class="a" style="left:938.20px;top:319.80px;width:57.10px;height:13.10px;background:#545454;border-radius:2.5px 2.5px 0 0;"></div><span class="t" style="left:906.80px;width:120px;text-align:center;top:321.45px;">0°</span><span class="t" style="right:92.10px;top:321.35px;">Rotación X</span><div class="a" style="left:938.20px;top:333.40px;width:57.10px;height:13.10px;background:#545454;border-radius:0;"></div><span class="t" style="left:906.80px;width:120px;text-align:center;top:335.05px;">0°</span><span class="t" style="right:92.10px;top:334.95px;">Y</span><div class="a" style="left:938.20px;top:346.80px;width:57.10px;height:13.10px;background:#545454;border-radius:0 0 2.5px 2.5px;"></div><span class="t" style="left:906.80px;width:120px;text-align:center;top:348.45px;">0°</span><span class="t" style="right:92.10px;top:348.35px;">Z</span><div class="a" style="left:938.20px;top:380.00px;width:57.10px;height:13.10px;background:#545454;border-radius:2.5px 2.5px 0 0;"></div><span class="t" style="left:906.80px;width:120px;text-align:center;top:381.65px;">1.000</span><span class="t" style="right:92.10px;top:381.55px;">Escala X</span><div class="a" style="left:938.20px;top:393.50px;width:57.10px;height:13.10px;background:#545454;border-radius:0;"></div><span class="t" style="left:906.80px;width:120px;text-align:center;top:395.15px;">1.000</span><span class="t" style="right:92.10px;top:395.05px;">Y</span><div class="a" style="left:938.20px;top:407.00px;width:57.10px;height:13.10px;background:#545454;border-radius:0 0 2.5px 2.5px;"></div><span class="t" style="left:906.80px;width:120px;text-align:center;top:408.65px;">1.000</span><span class="t" style="right:92.10px;top:408.55px;">Z</span><span class="t" style="right:92.10px;top:365.15px;">Modo</span><div class="a" style="left:938.20px;top:364.30px;width:57.10px;height:11.90px;background:#222222;border-radius:2.5px;"></div><span class="t" style="left:942.70px;top:365.15px;">Euler XYZ</span><svg style="left:0;top:0" width="1" height="1"><path d="M988.60 369.55L990.50 371.65L992.40 369.55" fill="none" stroke="#cecece" stroke-width="1.05" stroke-linecap="round" stroke-linejoin="round"/></svg><div class="a" style="left:1014.3px;top:281.6px;width:3px;height:3px;border-radius:1.5px;background:#e6e6e6"></div><div class="a" style="left:1014.3px;top:295.2px;width:3px;height:3px;border-radius:1.5px;background:#e6e6e6"></div><div class="a" style="left:1014.3px;top:308.8px;width:3px;height:3px;border-radius:1.5px;background:#e6e6e6"></div><div class="a" style="left:1014.3px;top:325.6px;width:3px;height:3px;border-radius:1.5px;background:#e6e6e6"></div><div class="a" style="left:1014.3px;top:339.2px;width:3px;height:3px;border-radius:1.5px;background:#e6e6e6"></div><div class="a" style="left:1014.3px;top:352.6px;width:3px;height:3px;border-radius:1.5px;background:#e6e6e6"></div><div class="a" style="left:1014.3px;top:385.8px;width:3px;height:3px;border-radius:1.5px;background:#e6e6e6"></div><div class="a" style="left:1014.3px;top:399.3px;width:3px;height:3px;border-radius:1.5px;background:#e6e6e6"></div><div class="a" style="left:1014.3px;top:412.8px;width:3px;height:3px;border-radius:1.5px;background:#e6e6e6"></div><div class="a" style="left:1014.3px;top:369.5px;width:3px;height:3px;border-radius:1.5px;background:#e6e6e6"></div><svg style="left:0;top:0" width="1" height="1"><path d="M895.80 432.50L898.20 434.90L895.80 437.30" fill="none" stroke="#c8c8c8" stroke-width="0.9" stroke-linecap="round" stroke-linejoin="round"/></svg><span class="t" style="left:903.30px;top:429.85px;">Transformación relativa</span><div class="a" style="left:879.00px;top:444.30px;width:151.00px;height:16.20px;background:#3d3d3d;border-radius:3px 0 0 3px;"></div><svg style="left:0;top:0" width="1" height="1"><path d="M886.60 450.10L889.00 452.50L886.60 454.90" fill="none" stroke="#c8c8c8" stroke-width="0.9" stroke-linecap="round" stroke-linejoin="round"/></svg><span class="t" style="left:894.00px;top:447.55px;">Relaciones</span><div class="a" style="left:879.00px;top:462.20px;width:151.00px;height:16.20px;background:#3d3d3d;border-radius:3px 0 0 3px;"></div><svg style="left:0;top:0" width="1" height="1"><path d="M886.60 468.00L889.00 470.40L886.60 472.80" fill="none" stroke="#c8c8c8" stroke-width="0.9" stroke-linecap="round" stroke-linejoin="round"/></svg><span class="t" style="left:894.00px;top:465.45px;">Colecciones</span><div class="a" style="left:879.00px;top:480.10px;width:151.00px;height:16.20px;background:#3d3d3d;border-radius:3px 0 0 3px;"></div><svg style="left:0;top:0" width="1" height="1"><path d="M886.60 485.80L889.00 488.20L886.60 490.60" fill="none" stroke="#c8c8c8" stroke-width="0.9" stroke-linecap="round" stroke-linejoin="round"/></svg><span class="t" style="left:894.00px;top:483.25px;">Instanciado</span><div class="a" style="left:879.00px;top:497.90px;width:151.00px;height:16.20px;background:#3d3d3d;border-radius:3px 0 0 3px;"></div><svg style="left:0;top:0" width="1" height="1"><path d="M886.60 503.60L889.00 506.00L886.60 508.40" fill="none" stroke="#c8c8c8" stroke-width="0.9" stroke-linecap="round" stroke-linejoin="round"/></svg><span class="t" style="left:894.00px;top:501.05px;">Trayectorias de movimiento</span><div class="a" style="left:879.00px;top:515.70px;width:151.00px;height:9.80px;background:#3d3d3d;border-radius:3px 0 0 3px;"></div><svg style="left:0;top:0" width="1" height="1"><path d="M886.60 521.40L889.00 523.80L886.60 526.20" fill="none" stroke="#c8c8c8" stroke-width="0.9" stroke-linecap="round" stroke-linejoin="round"/></svg><span class="t" style="left:894.00px;top:518.85px;">Sombreado</span><div class="a" style="left:853.70px;top:525.50px;width:176.30px;height:5.50px;background:#161616;"></div><div class="a" style="left:0.00px;top:489.50px;width:852.60px;height:36.70px;background:#1d1d1d;border-radius:3px;"></div><div class="a" style="left:0.00px;top:489.50px;width:852.60px;height:16.50px;background:#303030;border-radius:3px 3px 0 0;"></div><div class="a" style="left:0.00px;top:522.30px;width:852.60px;height:3.90px;background:#2b2b2b;border-radius:0 0 3px 3px;"></div><div class="a" style="left:2.40px;top:491.80px;width:20.30px;height:12.00px;background:#272727;border-radius:2.5px;box-shadow:inset 0 0 0 0.6px #3d3d3d;"></div><svg style="left:0;top:0" width="1" height="1"><path d="M17.10 496.95L19.00 499.05L20.90 496.95" fill="none" stroke="#cecece" stroke-width="1.05" stroke-linecap="round" stroke-linejoin="round"/></svg><div class="a" style="left:27.00px;top:491.80px;width:64.10px;height:12.00px;background:#262626;border-radius:2.5px 0 0 2.5px;"></div><span class="t" style="left:31.70px;top:492.55px;">Reproducción</span><svg style="left:0;top:0" width="1" height="1"><path d="M84.60 496.95L86.50 499.05L88.40 496.95" fill="none" stroke="#cecece" stroke-width="1.05" stroke-linecap="round" stroke-linejoin="round"/></svg><div class="a" style="left:91.50px;top:491.80px;width:41.00px;height:12.00px;background:#262626;border-radius:0 2.5px 2.5px 0;"></div><span class="t" style="left:96.50px;top:492.55px;">Claves</span><svg style="left:0;top:0" width="1" height="1"><path d="M126.40 496.95L128.30 499.05L130.20 496.95" fill="none" stroke="#cecece" stroke-width="1.05" stroke-linecap="round" stroke-linejoin="round"/></svg><span class="t" style="left:139.50px;top:492.55px;">Vista</span><span class="t" style="left:167.50px;top:492.55px;">Marcador</span><div class="a" style="left:362.00px;top:491.80px;width:12.50px;height:12.00px;background:#525252;border-radius:2.5px 0 0 2.5px;"></div><div class="a" style="left:374.90px;top:491.80px;width:12.10px;height:12.00px;background:#2b2b2b;border-radius:0 2.5px 2.5px 0;"></div><svg style="left:0;top:0" width="1" height="1"><path d="M379.10 496.95L381.00 499.05L382.90 496.95" fill="none" stroke="#555" stroke-width="1.05" stroke-linecap="round" stroke-linejoin="round"/></svg><div class="a" style="left:392.00px;top:491.80px;width:80.50px;height:12.00px;background:#525252;border-radius:2.5px;"></div><div class="a" style="left:663.00px;top:491.80px;width:49.50px;height:12.00px;background:#525252;border-radius:2.5px;"></div><span class="t" style="left:626.75px;width:120px;text-align:center;top:492.65px;">1</span><div class="a" style="left:716.25px;top:491.80px;width:13.15px;height:12.00px;background:#5a5a5a;border-radius:2.5px 0 0 2.5px;"></div><div class="a" style="left:729.80px;top:491.80px;width:61.30px;height:12.00px;background:#525252;"></div><span class="t" style="left:739.50px;top:492.65px;">Inicio</span><span class="t" style="right:241.70px;top:492.65px;">1</span><div class="a" style="left:791.50px;top:491.80px;width:55.50px;height:12.00px;background:#525252;border-radius:0 2.5px 2.5px 0;"></div><span class="t" style="left:802.50px;top:492.65px;">Fin</span><span class="t" style="right:186.50px;top:492.65px;">250</span><span class="t" style="left:-3.50px;width:120px;text-align:center;top:508.85px;color:#c0c0c0">10</span><span class="t" style="left:28.34px;width:120px;text-align:center;top:508.85px;color:#c0c0c0">20</span><span class="t" style="left:60.17px;width:120px;text-align:center;top:508.85px;color:#c0c0c0">30</span><span class="t" style="left:92.00px;width:120px;text-align:center;top:508.85px;color:#c0c0c0">40</span><span class="t" style="left:123.84px;width:120px;text-align:center;top:508.85px;color:#c0c0c0">50</span><span class="t" style="left:155.67px;width:120px;text-align:center;top:508.85px;color:#c0c0c0">60</span><span class="t" style="left:187.50px;width:120px;text-align:center;top:508.85px;color:#c0c0c0">70</span><span class="t" style="left:219.34px;width:120px;text-align:center;top:508.85px;color:#c0c0c0">80</span><span class="t" style="left:251.17px;width:120px;text-align:center;top:508.85px;color:#c0c0c0">90</span><span class="t" style="left:283.00px;width:120px;text-align:center;top:508.85px;color:#c0c0c0">100</span><span class="t" style="left:314.84px;width:120px;text-align:center;top:508.85px;color:#c0c0c0">110</span><span class="t" style="left:346.67px;width:120px;text-align:center;top:508.85px;color:#c0c0c0">120</span><span class="t" style="left:378.50px;width:120px;text-align:center;top:508.85px;color:#c0c0c0">130</span><span class="t" style="left:410.34px;width:120px;text-align:center;top:508.85px;color:#c0c0c0">140</span><span class="t" style="left:442.17px;width:120px;text-align:center;top:508.85px;color:#c0c0c0">150</span><span class="t" style="left:474.00px;width:120px;text-align:center;top:508.85px;color:#c0c0c0">160</span><span class="t" style="left:505.84px;width:120px;text-align:center;top:508.85px;color:#c0c0c0">170</span><span class="t" style="left:537.67px;width:120px;text-align:center;top:508.85px;color:#c0c0c0">180</span><span class="t" style="left:569.50px;width:120px;text-align:center;top:508.85px;color:#c0c0c0">190</span><span class="t" style="left:601.34px;width:120px;text-align:center;top:508.85px;color:#c0c0c0">200</span><span class="t" style="left:633.17px;width:120px;text-align:center;top:508.85px;color:#c0c0c0">210</span><span class="t" style="left:665.00px;width:120px;text-align:center;top:508.85px;color:#c0c0c0">220</span><span class="t" style="left:696.84px;width:120px;text-align:center;top:508.85px;color:#c0c0c0">230</span><span class="t" style="left:728.67px;width:120px;text-align:center;top:508.85px;color:#c0c0c0">240</span><span class="t" style="left:760.50px;width:120px;text-align:center;top:508.85px;color:#c0c0c0">250</span><svg style="left:0;top:0" width="1" height="1"><path d="M8.8 522.3V526.2M24.7 522.3V526.2M40.6 522.3V526.2M56.5 522.3V526.2M72.4 522.3V526.2M88.3 522.3V526.2M104.3 522.3V526.2M120.2 522.3V526.2M136.1 522.3V526.2M152.0 522.3V526.2M167.9 522.3V526.2M183.8 522.3V526.2M199.8 522.3V526.2M215.7 522.3V526.2M231.6 522.3V526.2M247.5 522.3V526.2M263.4 522.3V526.2M279.3 522.3V526.2M295.3 522.3V526.2M311.2 522.3V526.2M327.1 522.3V526.2M343.0 522.3V526.2M358.9 522.3V526.2M374.8 522.3V526.2M390.8 522.3V526.2M406.7 522.3V526.2M422.6 522.3V526.2M438.5 522.3V526.2M454.4 522.3V526.2M470.3 522.3V526.2M486.3 522.3V526.2M502.2 522.3V526.2M518.1 522.3V526.2M534.0 522.3V526.2M549.9 522.3V526.2M565.8 522.3V526.2M581.8 522.3V526.2M597.7 522.3V526.2M613.6 522.3V526.2M629.5 522.3V526.2M645.4 522.3V526.2M661.3 522.3V526.2M677.3 522.3V526.2M693.2 522.3V526.2M709.1 522.3V526.2M725.0 522.3V526.2M740.9 522.3V526.2M756.8 522.3V526.2M772.8 522.3V526.2M788.7 522.3V526.2M804.6 522.3V526.2M820.5 522.3V526.2M836.4 522.3V526.2M852.3 522.3V526.2" stroke="#222" stroke-width="0.8"/></svg><div class="a" style="left:27.45px;top:515.00px;width:1.00px;height:11.20px;background:#4772b3;"></div><div class="a" style="left:20.00px;top:508.80px;width:15.80px;height:10.70px;background:#4772b3;border-radius:2.5px;"></div><span class="t" style="left:-32.10px;width:120px;text-align:center;top:508.95px;color:#fff">1</span><div class="a" style="left:0.00px;top:526.20px;width:1024.00px;height:3.80px;background:#131313;"></div><div class="a" style="left:3.00px;top:528.20px;width:21.00px;height:4.80px;background:#2e2e2e;border-radius:2px;box-shadow:inset 0 0 0 0.6px #484848;"></div><span class="t" style="left:987.50px;top:527.95px;color:#b8b8b8">4.5.3 LTS</span><div class="a" style="left:820.60px;top:506.00px;width:32.00px;height:20.20px;background:rgba(0,0,0,0.18);border-radius:0 0 3px 0;"></div><svg style="left:0;top:0" width="1024" height="530" viewBox="0 0 1024 530"><circle cx="10.20" cy="15.90" r="3.1" fill="none" stroke="#dedede" stroke-width="1.5" /><circle cx="10.20" cy="15.90" r="1.0" fill="#dedede" stroke="none" stroke-width="0.9" /><path d="M3.1 15.3H8.2M8.4 11.3L12 13.6M3.2 18.4L7.6 15.6" fill="none" stroke="#dedede" stroke-width="1.2" stroke-linecap="round" stroke-linejoin="round" /><rect x="981.30" y="-3.00" width="5.40" height="4.20" rx="1.2" fill="none" stroke="#cfcfcf" stroke-width="1" /><path d="M1013.2 -3L1020 2.2M1020 -3L1013.2 2.2" fill="none" stroke="#cfcfcf" stroke-width="1" stroke-linecap="round" stroke-linejoin="round" /><path d="M6.5 33.2H15.5M6.5 36.3H15.5M8.6 31.5V37.8M12.6 31.5V37.8" fill="none" stroke="#dedede" stroke-width="0.8" stroke-linecap="round" stroke-linejoin="round" /><circle cx="12.90" cy="30.60" r="2.2" fill="#dedede" stroke="none" stroke-width="0.9" /><path d="M343.4 35.9V29.2M343.4 35.9H350" fill="none" stroke="#dedede" stroke-width="1" stroke-linecap="round" stroke-linejoin="round" /><path d="M341.7 30.2L343.4 27.6L345.1 30.2Z" fill="#dedede" /><path d="M349.6 34.2L352.2 35.9L349.6 37.6Z" fill="#dedede" /><path d="M344.3 35L348.3 31" fill="none" stroke="#bdbdbd" stroke-width="0.7" stroke-linecap="round" stroke-linejoin="round" /><path d="M346.5 30.6H348.8V32.9" fill="none" stroke="#bdbdbd" stroke-width="0.7" stroke-linecap="round" stroke-linejoin="round" /><circle cx="343.40" cy="35.90" r="1.1" fill="#272727" stroke="#dedede" stroke-width="0.8" /><circle cx="403.80" cy="34.40" r="2.7" fill="none" stroke="#dedede" stroke-width="0.95" /><circle cx="407.90" cy="30.90" r="2.7" fill="none" stroke="#dedede" stroke-width="0.95" /><circle cx="406.00" cy="32.70" r="0.9" fill="#dedede" stroke="none" stroke-width="0.9" /><g transform="translate(429.9 32.2) rotate(45)"><path d="M-3.5 3.4V-0.3A3.5 3.5 0 0 1 3.5 -0.3V3.4H1.4V-0.3A1.4 1.4 0 0 0 -1.4 -0.3V3.4Z" fill="none" stroke="#a6a6a6" stroke-width="0.85" stroke-linecap="round" stroke-linejoin="round" /></g><path d="M437.9 33.2V37.2M447 33.2V37.2M437.9 35.2H447M441 34V36.4M444 34V36.4" fill="none" stroke="#dedede" stroke-width="0.85" stroke-linecap="round" stroke-linejoin="round" /><rect x="444.80" y="28.40" width="2.50" height="2.50" rx="0" fill="#dedede" stroke="none" stroke-width="0.9" /><circle cx="467.40" cy="32.80" r="3.9" fill="none" stroke="#8a8a8a" stroke-width="0.9" /><circle cx="467.40" cy="32.80" r="1.5" fill="#f0f0f0" stroke="none" stroke-width="0.9" /><path d="M477.2 36.7C480.2 36.7 480.2 28.9 482 28.9C483.8 28.9 483.8 36.7 486.7 36.7" fill="none" stroke="#626262" stroke-width="0.85" stroke-linecap="round" stroke-linejoin="round" /><path d="M682.8 30.4C684.6 27.7 688.6 27.7 690.4 30.4C688.6 33.1 684.6 33.1 682.8 30.4Z" fill="none" stroke="#dedede" stroke-width="0.9" stroke-linecap="round" stroke-linejoin="round" /><circle cx="686.60" cy="30.40" r="1.2" fill="#dedede" stroke="none" stroke-width="0.9" /><path d="M681 32.5L686.2 34.4L684 35.2L683.2 37.5Z" fill="#dedede" /><path d="M707.4 36.3L714.6 29.3M712 28.7H715.2V31.9" fill="none" stroke="#f0f0f0" stroke-width="1" stroke-linecap="round" stroke-linejoin="round" /><circle cx="706.90" cy="36.70" r="1.1" fill="none" stroke="#f0f0f0" stroke-width="0.85" /><path d="M706 29.6C710.5 29.9 713.4 33 713.6 37.3" fill="none" stroke="#f0f0f0" stroke-width="0.9" stroke-linecap="round" stroke-linejoin="round" /><circle cx="742.30" cy="31.30" r="3" fill="#f4f4f4" stroke="none" stroke-width="0.9" /><path d="M738.5 31.4A3.4 3.4 0 0 0 742.6 37.6" fill="none" stroke="#f0f0f0" stroke-width="0.95" stroke-linecap="round" stroke-linejoin="round" /><rect x="766.50" y="30.80" width="6.50" height="6.50" rx="0.6" fill="none" stroke="#cfcfcf" stroke-width="0.85" /><path d="M769.2 30.6V28.3H775.7V34.8H773.3" fill="none" stroke="#cfcfcf" stroke-width="0.85" stroke-linecap="round" stroke-linejoin="round" /><circle cx="787.90" cy="32.70" r="4.4" fill="none" stroke="#c9c9c9" stroke-width="0.85" /><path d="M783.5 32.7H792.3M787.9 28.3V37.1M784.4 30.3C786.6 31.3 789.2 31.3 791.4 30.3M784.4 35.1C786.6 34.1 789.2 34.1 791.4 35.1" fill="none" stroke="#c9c9c9" stroke-width="0.6" stroke-linecap="round" stroke-linejoin="round" /><circle cx="800.80" cy="32.75" r="4.5" fill="#dfe7f5" stroke="none" stroke-width="0.9" /><circle cx="813.90" cy="32.75" r="4.5" fill="#bdbdbd" stroke="none" stroke-width="0.9" /><path d="M813.9 32.75V28.25A4.5 4.5 0 0 1 818.4 32.75A4.5 4.5 0 0 1 817.4 35.6Z" fill="#595959" /><path d="M813.9 32.75L817.4 35.6A4.5 4.5 0 0 1 811 36.2Z" fill="#8a8a8a" /><circle cx="826.80" cy="32.75" r="4.2" fill="#5e5e5e" stroke="#b4b4b4" stroke-width="0.9" /><path d="M824.3 31.6A2.9 2.9 0 0 1 827 29.8" fill="none" stroke="#d8d8d8" stroke-width="0.9" stroke-linecap="round" stroke-linejoin="round" /><rect x="4.50" y="46.60" width="10.00" height="8.40" rx="0" fill="none" stroke="#dfe7ff" stroke-width="0.9" stroke-dasharray="1.2 1.1"/><g transform="translate(3.6 0)"><rect x="6.30" y="68.50" width="14.70" height="15.70" rx="1" fill="none" stroke="#f0c040" stroke-width="1" stroke-dasharray="1.6 1.4"/><path d="M12.5 71.5L19 77.5H15.3L13.6 81Z" fill="#fff" /><circle cx="12.60" cy="98.30" r="6" fill="none" stroke="#e8e8e8" stroke-width="1" /><circle cx="12.60" cy="98.30" r="6" fill="none" stroke="#e0343f" stroke-width="1" stroke-dasharray="2.4 2.4"/><path d="M12.6 89.5V95M12.6 101.5V107M4 98.3H9.5M15.7 98.3H21" fill="none" stroke="#e8e8e8" stroke-width="0.9" stroke-linecap="round" stroke-linejoin="round" /><path d="M5.5 125H19.5M12.5 118V132" fill="none" stroke="#dedede" stroke-width="1" stroke-linecap="round" stroke-linejoin="round" /><path d="M4 125L7 122.7V127.3Z" fill="#dedede" /><path d="M21 125L18 122.7V127.3Z" fill="#dedede" /><path d="M12.5 116.5L10.2 119.5H14.8Z" fill="#dedede" /><path d="M12.5 133.5L10.2 130.5H14.8Z" fill="#dedede" /><circle cx="12.50" cy="146.50" r="5.2" fill="none" stroke="#dedede" stroke-width="1" /><circle cx="12.50" cy="146.50" r="1" fill="#dedede" stroke="none" stroke-width="0.9" /><path d="M6 139.5L9.5 141L7 143.5Z" fill="#dedede" /><rect x="6.50" y="164.00" width="12.00" height="12.00" rx="0.8" fill="none" stroke="#dedede" stroke-width="1" /><rect x="11.00" y="168.50" width="7.50" height="7.50" rx="0" fill="#2b2b2b" stroke="#dedede" stroke-width="1" /><circle cx="12.50" cy="192.50" r="5" fill="none" stroke="#dedede" stroke-width="1" /><path d="M12.5 185V200M5 192.5H20" fill="none" stroke="#dedede" stroke-width="0.8" stroke-linecap="round" stroke-linejoin="round" /><path d="M7 224L15 213.5L18 216L10 226.5L6.5 227Z" fill="none" stroke="#dedede" stroke-width="0.9" stroke-linecap="round" stroke-linejoin="round" /><path d="M8 228C12 231 16 226 19 229" fill="none" stroke="#67c26a" stroke-width="1.1" stroke-linecap="round" stroke-linejoin="round" /><path d="M7 236V250.5H19" fill="none" stroke="#dedede" stroke-width="1.1" stroke-linecap="round" stroke-linejoin="round" /><path d="M9.5 239H7M9.5 242.5H7M9.5 246H7" fill="none" stroke="#fff" stroke-width="0.7" stroke-linecap="round" stroke-linejoin="round" /><rect x="8.50" y="268.00" width="10.00" height="10.50" rx="0" fill="none" stroke="#b4dcb4" stroke-width="0.9" /><path d="M6.5 263.8V268.3M4.2 266H8.8" fill="none" stroke="#67c26a" stroke-width="1.1" stroke-linecap="round" stroke-linejoin="round" /></g><circle cx="838.30" cy="127.80" r="3.3" fill="none" stroke="#f0f0f0" stroke-width="1.1" /><path d="M835.9 130.4L832.3 134.2" fill="none" stroke="#f0f0f0" stroke-width="1.4" stroke-linecap="round" stroke-linejoin="round" /><path d="M836.6 127.8H840M838.3 126.1V129.5" fill="none" stroke="#f0f0f0" stroke-width="0.8" stroke-linecap="round" stroke-linejoin="round" /><path d="M832.6 149.2L834 148.2L835.4 150.3V145.2Q836 144.3 836.6 145.2V143.9Q837.3 143 838 143.9V144.4Q838.7 143.6 839.4 144.5V145.6Q840.2 145 840.8 145.9V151.8Q840.6 155.2 837.6 155.3Q835.2 155.4 834.2 153Z" fill="#f2f2f2" /><circle cx="834.20" cy="167.00" r="1.9" fill="none" stroke="#ececec" stroke-width="0.9" /><circle cx="838.90" cy="166.30" r="2.5" fill="none" stroke="#ececec" stroke-width="0.9" /><rect x="832.80" y="170.40" width="7.00" height="4.20" rx="0.8" fill="none" stroke="#ececec" stroke-width="0.9" /><path d="M840.3 172.5L842.9 170.8V174.2Z" fill="#ececec" /><path d="M834.2 185H840L842.4 194.4H831.8ZM832.9 189.7H841.3M836.2 185L835.4 194.4M838 185L838.8 194.4" fill="none" stroke="#ececec" stroke-width="0.9" stroke-linecap="round" stroke-linejoin="round" /><path d="M810.6 19L812.8 11.4L815 19Z" fill="#dedede" /><circle cx="816.90" cy="17.50" r="2.1" fill="#181818" stroke="#dedede" stroke-width="0.85" /><circle cx="818.40" cy="12.00" r="1.15" fill="#dedede" stroke="none" stroke-width="0.9" /><path d="M821.9 14.9L824.1 17L826.3 14.9" fill="none" stroke="#dedede" stroke-width="0.95" stroke-linecap="round" stroke-linejoin="round" /><g transform="translate(888.4 15.7) rotate(45)"><path d="M-1.6 -4.6H1.6M-1.2 -4.6V-1.2L-2.6 0.6H2.6L1.2 -1.2V-4.6M0 0.6V4.8" fill="none" stroke="#a8a8a8" stroke-width="0.8" stroke-linecap="round" stroke-linejoin="round" /></g><path d="M898.6 13.6V19.2H903.6" fill="none" stroke="#d8d8d8" stroke-width="0.85" stroke-linecap="round" stroke-linejoin="round" /><path d="M900.4 11.2H904L905.6 12.799999999999999V17.4H900.4Z" fill="none" stroke="#d8d8d8" stroke-width="0.85" stroke-linecap="round" stroke-linejoin="round" /><path d="M1004.8000000000001 13.6V19.2H1009.8000000000001" fill="none" stroke="#d8d8d8" stroke-width="0.85" stroke-linecap="round" stroke-linejoin="round" /><path d="M1006.6 11.2H1010.2L1011.8000000000001 12.799999999999999V17.4H1006.6Z" fill="none" stroke="#d8d8d8" stroke-width="0.85" stroke-linecap="round" stroke-linejoin="round" /><path d="M913.8 13.1L918.6 17.9M918.6 13.1L913.8 17.9" fill="none" stroke="#555" stroke-width="0.85" stroke-linecap="round" stroke-linejoin="round" /><path d="M1019.8 13.1L1024.6 17.9M1024.6 13.1L1019.8 17.9" fill="none" stroke="#555" stroke-width="0.85" stroke-linecap="round" stroke-linejoin="round" /><path d="M930.0 14.399999999999999H932.2V19.4H937.2V20.6H930.0Z" fill="#6a6a6a" /><path d="M931.0 12.399999999999999H932.2V18.799999999999997H938.2V19.6H931.0Z" fill="#9a9a9a" /><rect x="932.20" y="10.80" width="6.80" height="6.80" rx="0.5" fill="none" stroke="#dedede" stroke-width="0.85" /><path d="M933.2 16.599999999999998L935.2 13.0L938.0 16.599999999999998Z" fill="#dedede" /><path d="M941 14.7L943.2 16.8L945.4 14.7" fill="none" stroke="#dedede" stroke-width="0.95" stroke-linecap="round" stroke-linejoin="round" /><rect x="863.10" y="28.20" width="3.60" height="1.90" rx="0" fill="#dedede" stroke="none" stroke-width="0.9" /><rect x="868.10" y="32.20" width="5.20" height="1.90" rx="0" fill="#dedede" stroke="none" stroke-width="0.9" /><rect x="868.10" y="35.80" width="5.20" height="2.10" rx="0" fill="#dedede" stroke="none" stroke-width="0.9" /><path d="M864.9 30.1V36.9H868M864.9 33.2H868" fill="none" stroke="#bdbdbd" stroke-width="0.7" stroke-linecap="round" stroke-linejoin="round" /><path d="M889.18 31.990000000000002H891.27V36.74H896.02V37.88H889.18Z" fill="#6a6a6a" /><path d="M890.13 30.09H891.27V36.17H896.97V36.93H890.13Z" fill="#9a9a9a" /><rect x="891.27" y="28.57" width="6.46" height="6.46" rx="0.5" fill="none" stroke="#dedede" stroke-width="0.85" /><path d="M892.22 34.08L894.12 30.66L896.78 34.08Z" fill="#dedede" /><circle cx="926.30" cy="31.50" r="2.7" fill="none" stroke="#d0d0d0" stroke-width="0.95" /><path d="M924.4 33.6L920.6 37.3" fill="none" stroke="#d0d0d0" stroke-width="1.1" stroke-linecap="round" stroke-linejoin="round" /><path d="M1009.4 28.6H1019.2L1015.5 33V37.6L1013.1 36.2V33Z" fill="none" stroke="#d8d8d8" stroke-width="0.9" stroke-linecap="round" stroke-linejoin="round" /><rect x="870.30" y="44.00" width="9.40" height="2.60" rx="0.4" fill="#e2e2e2" stroke="none" stroke-width="0" /><path d="M871 47.300000000000004H879V52.400000000000006H871Z" fill="#e2e2e2" /><rect x="873.70" y="48.60" width="2.60" height="1.00" rx="0" fill="#282828" stroke="none" stroke-width="0.9" /><rect x="883.90" y="57.90" width="9.40" height="2.60" rx="0.4" fill="#ececec" stroke="none" stroke-width="0" /><path d="M884.6 61.2H892.6V66.3H884.6Z" fill="#ececec" /><rect x="887.30" y="62.50" width="2.60" height="1.00" rx="0" fill="#505050" stroke="none" stroke-width="0.9" /><circle cx="899.40" cy="74.30" r="2.1" fill="#e4904a" stroke="none" stroke-width="0.9" /><circle cx="903.80" cy="73.80" r="2.7" fill="#e4904a" stroke="none" stroke-width="0.9" /><rect x="897.90" y="77.60" width="6.00" height="3.60" rx="0.6" fill="#e4904a" stroke="none" stroke-width="0" /><path d="M904.2 79.4L907 77.6V81.2Z" fill="#e4904a" /><circle cx="899.40" cy="74.30" r="0.6" fill="#282828" stroke="none" stroke-width="0.9" /><circle cx="903.80" cy="73.80" r="0.8" fill="#282828" stroke="none" stroke-width="0.9" /><path d="M897.6 86.1H906.5L902.1 93.6Z" fill="none" stroke="#e4904a" stroke-width="1.7" stroke-linecap="round" stroke-linejoin="round" /><circle cx="902.30" cy="100.90" r="3.8" fill="#e4904a" stroke="none" stroke-width="0.9" /><rect x="900.80" y="104.80" width="3.00" height="2.80" rx="0.5" fill="#e4904a" stroke="none" stroke-width="0" /><path d="M901 100.4L901.6 102.6H903L903.6 100.4" fill="none" stroke="#8a4f22" stroke-width="0.7" stroke-linecap="round" stroke-linejoin="round" /><circle cx="957.30" cy="74.30" r="2" fill="none" stroke="#1bb08a" stroke-width="0.85" /><circle cx="961.40" cy="74.00" r="2.5" fill="none" stroke="#1bb08a" stroke-width="0.85" /><rect x="956.20" y="77.20" width="5.60" height="3.40" rx="0.6" fill="none" stroke="#1bb08a" stroke-width="0.85" /><path d="M962.2 78.9L964.6 77.3V80.5Z" fill="#1bb08a" stroke="#1bb08a" stroke-width="0.8" stroke-linecap="round" stroke-linejoin="round" /><path d="M954.6 78.9H956" fill="none" stroke="#1bb08a" stroke-width="0.8" stroke-linecap="round" stroke-linejoin="round" /><path d="M947.3 86.2H952.7M946.8 87L949.4 91.4M953.2 87L950.6 91.4" fill="none" stroke="#1bb08a" stroke-width="0.9" stroke-linecap="round" stroke-linejoin="round" /><circle cx="946.30" cy="85.80" r="1.1" fill="none" stroke="#1bb08a" stroke-width="0.85" /><circle cx="953.70" cy="85.80" r="1.1" fill="none" stroke="#1bb08a" stroke-width="0.85" /><circle cx="950.00" cy="92.30" r="1.1" fill="none" stroke="#1bb08a" stroke-width="0.85" /><circle cx="949.30" cy="101.80" r="4.4" fill="none" stroke="#1bb08a" stroke-width="0.9" /><circle cx="949.30" cy="101.80" r="1" fill="#1bb08a" stroke="none" stroke-width="0.9" /><path d="M949.3 102.5V107.8" fill="none" stroke="#1bb08a" stroke-width="0.9" stroke-linecap="round" stroke-linejoin="round" /><rect x="989.90" y="59.00" width="7.10" height="6.80" rx="1" fill="#e4e4e4" stroke="none" stroke-width="0" /><path d="M991.6 62.4L993.2 64L995.6 60.8" fill="none" stroke="#1a1a1a" stroke-width="1.1" stroke-linecap="round" stroke-linejoin="round" /><path d="M1002.4 62.5C1004.6 59.1 1009.4 59.1 1011.6 62.5C1009.4 65.9 1004.6 65.9 1002.4 62.5Z" fill="none" stroke="#e0e0e0" stroke-width="0.95" stroke-linecap="round" stroke-linejoin="round" /><circle cx="1007.00" cy="62.50" r="1.5" fill="#e0e0e0" stroke="none" stroke-width="0.9" /><path d="M1015.8 59.9H1018L1018.8 58.5H1022.6L1023.4 59.9H1026V65.9H1015.8Z" fill="#e0e0e0" /><circle cx="1020.80" cy="62.80" r="2.2" fill="#282828" stroke="none" stroke-width="0.9" /><circle cx="1020.80" cy="62.80" r="1.1" fill="#e0e0e0" stroke="none" stroke-width="0.9" /><path d="M1002.4 76.1C1004.6 72.69999999999999 1009.4 72.69999999999999 1011.6 76.1C1009.4 79.5 1004.6 79.5 1002.4 76.1Z" fill="none" stroke="#e0e0e0" stroke-width="0.95" stroke-linecap="round" stroke-linejoin="round" /><circle cx="1007.00" cy="76.10" r="1.5" fill="#e0e0e0" stroke="none" stroke-width="0.9" /><path d="M1015.8 73.5H1018L1018.8 72.1H1022.6L1023.4 73.5H1026V79.5H1015.8Z" fill="#e0e0e0" /><circle cx="1020.80" cy="76.40" r="2.2" fill="#282828" stroke="none" stroke-width="0.9" /><circle cx="1020.80" cy="76.40" r="1.1" fill="#e0e0e0" stroke="none" stroke-width="0.9" /><path d="M1002.4 89.5C1004.6 86.1 1009.4 86.1 1011.6 89.5C1009.4 92.9 1004.6 92.9 1002.4 89.5Z" fill="none" stroke="#e0e0e0" stroke-width="0.95" stroke-linecap="round" stroke-linejoin="round" /><circle cx="1007.00" cy="89.50" r="1.5" fill="#e0e0e0" stroke="none" stroke-width="0.9" /><path d="M1015.8 86.9H1018L1018.8 85.5H1022.6L1023.4 86.9H1026V92.9H1015.8Z" fill="#e0e0e0" /><circle cx="1020.80" cy="89.80" r="2.2" fill="#282828" stroke="none" stroke-width="0.9" /><circle cx="1020.80" cy="89.80" r="1.1" fill="#e0e0e0" stroke="none" stroke-width="0.9" /><path d="M1002.4 103C1004.6 99.6 1009.4 99.6 1011.6 103C1009.4 106.4 1004.6 106.4 1002.4 103Z" fill="none" stroke="#e0e0e0" stroke-width="0.95" stroke-linecap="round" stroke-linejoin="round" /><circle cx="1007.00" cy="103.00" r="1.5" fill="#e0e0e0" stroke="none" stroke-width="0.9" /><path d="M1015.8 100.4H1018L1018.8 99H1022.6L1023.4 100.4H1026V106.4H1015.8Z" fill="#e0e0e0" /><circle cx="1020.80" cy="103.30" r="2.2" fill="#282828" stroke="none" stroke-width="0.9" /><circle cx="1020.80" cy="103.30" r="1.1" fill="#e0e0e0" stroke="none" stroke-width="0.9" /><rect x="862.90" y="190.70" width="10.00" height="4.00" rx="2" fill="#dedede" stroke="none" stroke-width="0" /><rect x="867.20" y="191.60" width="4.60" height="2.20" rx="1.1" fill="#272727" stroke="none" stroke-width="0" /><rect x="862.90" y="196.20" width="10.00" height="4.10" rx="2.05" fill="#dedede" stroke="none" stroke-width="0" /><circle cx="870.40" cy="198.25" r="1.15" fill="#272727" stroke="none" stroke-width="0.9" /><circle cx="910.50" cy="194.70" r="2.7" fill="none" stroke="#d0d0d0" stroke-width="0.95" /><path d="M908.6 196.8L904.8 200.5" fill="none" stroke="#d0d0d0" stroke-width="1.1" stroke-linecap="round" stroke-linejoin="round" /><rect x="883.20" y="214.20" width="5.00" height="5.00" rx="0.4" fill="#dedede" stroke="none" stroke-width="0" /><path d="M881.1 213.89999999999998V212.1H882.9000000000001M888.5 212.1H890.3000000000001V213.89999999999998M890.3000000000001 219.5V221.29999999999998H888.5M882.9000000000001 221.29999999999998H881.1V219.5" fill="none" stroke="#dedede" stroke-width="0.85" stroke-linecap="round" stroke-linejoin="round" /><rect x="884.10" y="238.30" width="5.00" height="5.00" rx="0.4" fill="#dedede" stroke="none" stroke-width="0" /><path d="M882.0 238.0V236.20000000000002H883.8000000000001M889.4 236.20000000000002H891.2V238.0M891.2 243.60000000000002V245.4H889.4M883.8000000000001 245.4H882.0V243.60000000000002" fill="none" stroke="#dedede" stroke-width="0.85" stroke-linecap="round" stroke-linejoin="round" /><g transform="translate(1020 217) rotate(45)"><path d="M-1.6 -4.6H1.6M-1.2 -4.6V-1.2L-2.6 0.6H2.6L1.2 -1.2V-4.6M0 0.6V4.8" fill="none" stroke="#a8a8a8" stroke-width="0.8" stroke-linecap="round" stroke-linejoin="round" /></g><path d="M861.5 214.6V219.6" fill="none" stroke="#c6c6c6" stroke-width="0.9" stroke-linecap="round" stroke-linejoin="round" /><rect x="860.50" y="219.60" width="2.00" height="4.60" rx="0.8" fill="#c6c6c6" stroke="none" stroke-width="0" /><path d="M867.3 224V219.2" fill="none" stroke="#c6c6c6" stroke-width="1.7" stroke-linecap="round" stroke-linejoin="round" /><path d="M865.3 214.8V217.2A2 2 0 0 0 869.3 217.2V214.8" fill="none" stroke="#c6c6c6" stroke-width="0.95" stroke-linecap="round" stroke-linejoin="round" /><rect x="860.10" y="239.60" width="8.00" height="7.20" rx="0.6" fill="none" stroke="#c6c6c6" stroke-width="0.9" /><path d="M862.3 239.4V237.9H865.5V239.4" fill="none" stroke="#c6c6c6" stroke-width="0.85" stroke-linecap="round" stroke-linejoin="round" /><path d="M868.3 240.8H869.9V245.4H868.3Z" fill="#c6c6c6" /><rect x="860.10" y="256.40" width="9.60" height="2.20" rx="0.5" fill="#c6c6c6" stroke="none" stroke-width="0" /><path d="M860.5 259.4V262.6H861.9M869.3 259.4V262.6H867.9" fill="none" stroke="#c6c6c6" stroke-width="0.85" stroke-linecap="round" stroke-linejoin="round" /><rect x="862.10" y="260.60" width="5.60" height="4.80" rx="0" fill="none" stroke="#c6c6c6" stroke-width="0.8" /><path d="M863.1 264.6L864.9 262L866.6999999999999 264.6Z" fill="#c6c6c6" /><path d="M860.78 279.39H862.87V284.14H867.62V285.28H860.78Z" fill="#6a6a6a" /><path d="M861.73 277.49H862.87V283.57H868.57V284.33H861.73Z" fill="#9a9a9a" /><rect x="862.87" y="275.97" width="6.46" height="6.46" rx="0.5" fill="none" stroke="#dedede" stroke-width="0.85" /><path d="M863.82 281.47999999999996L865.72 278.06L868.38 281.47999999999996Z" fill="#dedede" /><path d="M860.1 303.6L862.5 295.2L864.9 303.6Z" fill="#c6c6c6" /><circle cx="866.70" cy="301.80" r="2.2" fill="#1e1e1e" stroke="#c6c6c6" stroke-width="0.85" /><circle cx="868.30" cy="295.80" r="1.2" fill="#c6c6c6" stroke="none" stroke-width="0.9" /><circle cx="864.90" cy="318.40" r="4.4" fill="none" stroke="#b8464f" stroke-width="1" /><path d="M861.3 316.4Q863.9 314.6 865.5 316.6Q864.5 318.6 862.5 319Q861.3 318.4 861.3 316.4ZM865.5 320Q867.3 319 868.5 320Q867.3 322.2 865.5 322Z" fill="#b8464f" /><rect x="860.20" y="337.40" width="9.40" height="2.40" rx="0.4" fill="none" stroke="#dcdcdc" stroke-width="0.85" /><rect x="861.00" y="340.60" width="7.80" height="5.80" rx="0.4" fill="none" stroke="#dcdcdc" stroke-width="0.85" /><path d="M863.6999999999999 342.6H866.1" fill="none" stroke="#dcdcdc" stroke-width="1" stroke-linecap="round" stroke-linejoin="round" /><rect x="861.90" y="363.80" width="5.00" height="5.00" rx="0.4" fill="#f0a050" stroke="none" stroke-width="0" /><path d="M859.8 363.5V361.7H861.6M867.1999999999999 361.7H869.0V363.5M869.0 369.1V370.90000000000003H867.1999999999999M861.6 370.90000000000003H859.8V369.1" fill="none" stroke="#e8923a" stroke-width="0.85" stroke-linecap="round" stroke-linejoin="round" /><g transform="translate(864.9 385.2) rotate(45)"><path d="M0 5.4V-0.6" fill="none" stroke="#5c8fe6" stroke-width="2" stroke-linecap="round" stroke-linejoin="round" /><path d="M-2.3 -4.6V-2.6A2.3 2.3 0 0 0 2.3 -2.6V-4.6" fill="none" stroke="#5c8fe6" stroke-width="1.5" stroke-linecap="round" stroke-linejoin="round" /></g><circle cx="861.50" cy="400.60" r="1.3" fill="#5c8fe6" stroke="none" stroke-width="0.9" /><circle cx="868.30" cy="400.60" r="1" fill="#5c8fe6" stroke="none" stroke-width="0.9" /><circle cx="861.50" cy="407.60" r="1" fill="#5c8fe6" stroke="none" stroke-width="0.9" /><circle cx="868.10" cy="407.20" r="1.1" fill="#5c8fe6" stroke="none" stroke-width="0.9" /><path d="M861.5 400.6H868.3M861.5 400.6V407.6M861.5 400.6L868.1 407.2" fill="none" stroke="#5c8fe6" stroke-width="0.8" stroke-linecap="round" stroke-linejoin="round" /><circle cx="864.50" cy="423.00" r="1.6" fill="#5c8fe6" stroke="none" stroke-width="0.9" /><path d="M866.6999999999999 419.4A4.2 4.2 0 1 0 868.1 425.4" fill="none" stroke="#5c8fe6" stroke-width="0.9" stroke-linecap="round" stroke-linejoin="round" /><circle cx="868.30" cy="419.60" r="0.9" fill="#5c8fe6" stroke="none" stroke-width="0.9" /><g transform="translate(864.9 441.8) rotate(-35)"><rect x="-5.00" y="-2.90" width="6.60" height="5.80" rx="2.9" fill="none" stroke="#5c8fe6" stroke-width="0.95" /><rect x="-1.60" y="-2.20" width="6.60" height="4.40" rx="2.2" fill="none" stroke="#5c8fe6" stroke-width="0.95" /><circle cx="-1.80" cy="0.00" r="1.2" fill="none" stroke="#5c8fe6" stroke-width="0.8" /></g><path d="M862.3 457.4H867.5M861.6999999999999 458.2L864.3 463M868.1 458.2L865.5 463" fill="none" stroke="#1bb08a" stroke-width="0.9" stroke-linecap="round" stroke-linejoin="round" /><circle cx="861.20" cy="457.00" r="1.1" fill="none" stroke="#1bb08a" stroke-width="0.85" /><circle cx="868.60" cy="457.00" r="1.1" fill="none" stroke="#1bb08a" stroke-width="0.85" /><circle cx="864.90" cy="464.00" r="1.1" fill="none" stroke="#1bb08a" stroke-width="0.85" /><circle cx="864.90" cy="479.00" r="4.3" fill="#d4636e" stroke="none" stroke-width="0.9" /><path d="M864.9 479V474.7A4.3 4.3 0 0 1 869.1999999999999 479Z" fill="#1e1e1e" /><path d="M864.9 479L861.9 482A4.3 4.3 0 0 0 866.4 483Z" fill="#1e1e1e" /><rect x="1001.40" y="282.40" width="5.40" height="3.90" rx="0.5" fill="none" stroke="#b6b6b6" stroke-width="0.7" /><path d="M997.6 281.7V280.90000000000003A2.1 2.1 0 0 1 1001.8 280.90000000000003V282.3" fill="none" stroke="#b6b6b6" stroke-width="0.7" stroke-linecap="round" stroke-linejoin="round" /><path d="M1003.2 284.3H1005" fill="none" stroke="#b6b6b6" stroke-width="0.6" stroke-linecap="round" stroke-linejoin="round" /><rect x="1001.40" y="296.00" width="5.40" height="3.90" rx="0.5" fill="none" stroke="#b6b6b6" stroke-width="0.7" /><path d="M997.6 295.29999999999995V294.5A2.1 2.1 0 0 1 1001.8 294.5V295.9" fill="none" stroke="#b6b6b6" stroke-width="0.7" stroke-linecap="round" stroke-linejoin="round" /><path d="M1003.2 297.9H1005" fill="none" stroke="#b6b6b6" stroke-width="0.6" stroke-linecap="round" stroke-linejoin="round" /><rect x="1001.40" y="309.60" width="5.40" height="3.90" rx="0.5" fill="none" stroke="#b6b6b6" stroke-width="0.7" /><path d="M997.6 308.9V308.1A2.1 2.1 0 0 1 1001.8 308.1V309.5" fill="none" stroke="#b6b6b6" stroke-width="0.7" stroke-linecap="round" stroke-linejoin="round" /><path d="M1003.2 311.5H1005" fill="none" stroke="#b6b6b6" stroke-width="0.6" stroke-linecap="round" stroke-linejoin="round" /><rect x="1001.40" y="326.40" width="5.40" height="3.90" rx="0.5" fill="none" stroke="#b6b6b6" stroke-width="0.7" /><path d="M997.6 325.7V324.90000000000003A2.1 2.1 0 0 1 1001.8 324.90000000000003V326.3" fill="none" stroke="#b6b6b6" stroke-width="0.7" stroke-linecap="round" stroke-linejoin="round" /><path d="M1003.2 328.3H1005" fill="none" stroke="#b6b6b6" stroke-width="0.6" stroke-linecap="round" stroke-linejoin="round" /><rect x="1001.40" y="340.00" width="5.40" height="3.90" rx="0.5" fill="none" stroke="#b6b6b6" stroke-width="0.7" /><path d="M997.6 339.29999999999995V338.5A2.1 2.1 0 0 1 1001.8 338.5V339.9" fill="none" stroke="#b6b6b6" stroke-width="0.7" stroke-linecap="round" stroke-linejoin="round" /><path d="M1003.2 341.9H1005" fill="none" stroke="#b6b6b6" stroke-width="0.6" stroke-linecap="round" stroke-linejoin="round" /><rect x="1001.40" y="353.40" width="5.40" height="3.90" rx="0.5" fill="none" stroke="#b6b6b6" stroke-width="0.7" /><path d="M997.6 352.7V351.90000000000003A2.1 2.1 0 0 1 1001.8 351.90000000000003V353.3" fill="none" stroke="#b6b6b6" stroke-width="0.7" stroke-linecap="round" stroke-linejoin="round" /><path d="M1003.2 355.3H1005" fill="none" stroke="#b6b6b6" stroke-width="0.6" stroke-linecap="round" stroke-linejoin="round" /><rect x="1001.40" y="386.60" width="5.40" height="3.90" rx="0.5" fill="none" stroke="#b6b6b6" stroke-width="0.7" /><path d="M997.6 385.9V385.1A2.1 2.1 0 0 1 1001.8 385.1V386.5" fill="none" stroke="#b6b6b6" stroke-width="0.7" stroke-linecap="round" stroke-linejoin="round" /><path d="M1003.2 388.5H1005" fill="none" stroke="#b6b6b6" stroke-width="0.6" stroke-linecap="round" stroke-linejoin="round" /><rect x="1001.40" y="400.10" width="5.40" height="3.90" rx="0.5" fill="none" stroke="#b6b6b6" stroke-width="0.7" /><path d="M997.6 399.4V398.6A2.1 2.1 0 0 1 1001.8 398.6V400.0" fill="none" stroke="#b6b6b6" stroke-width="0.7" stroke-linecap="round" stroke-linejoin="round" /><path d="M1003.2 402.0H1005" fill="none" stroke="#b6b6b6" stroke-width="0.6" stroke-linecap="round" stroke-linejoin="round" /><rect x="1001.40" y="413.60" width="5.40" height="3.90" rx="0.5" fill="none" stroke="#b6b6b6" stroke-width="0.7" /><path d="M997.6 412.9V412.1A2.1 2.1 0 0 1 1001.8 412.1V413.5" fill="none" stroke="#b6b6b6" stroke-width="0.7" stroke-linecap="round" stroke-linejoin="round" /><path d="M1003.2 415.5H1005" fill="none" stroke="#b6b6b6" stroke-width="0.6" stroke-linecap="round" stroke-linejoin="round" /><path d="M1015.6 261.09999999999997V262.29999999999995M1015.6 263.5V264.7M1017.8 261.09999999999997V262.29999999999995M1017.8 263.5V264.7M1020 261.09999999999997V262.29999999999995M1020 263.5V264.7M1022.2 261.09999999999997V262.29999999999995M1022.2 263.5V264.7" fill="none" stroke="#4e4e4e" stroke-width="0.9" stroke-linecap="round" stroke-linejoin="round" /><path d="M1015.6 450.9V452.09999999999997M1015.6 453.3V454.5M1017.8 450.9V452.09999999999997M1017.8 453.3V454.5M1020 450.9V452.09999999999997M1020 453.3V454.5M1022.2 450.9V452.09999999999997M1022.2 453.3V454.5" fill="none" stroke="#4e4e4e" stroke-width="0.9" stroke-linecap="round" stroke-linejoin="round" /><path d="M1015.6 468.8V470.0M1015.6 471.20000000000005V472.40000000000003M1017.8 468.8V470.0M1017.8 471.20000000000005V472.40000000000003M1020 468.8V470.0M1020 471.20000000000005V472.40000000000003M1022.2 468.8V470.0M1022.2 471.20000000000005V472.40000000000003" fill="none" stroke="#4e4e4e" stroke-width="0.9" stroke-linecap="round" stroke-linejoin="round" /><path d="M1015.6 486.59999999999997V487.79999999999995M1015.6 489.0V490.2M1017.8 486.59999999999997V487.79999999999995M1017.8 489.0V490.2M1020 486.59999999999997V487.79999999999995M1020 489.0V490.2M1022.2 486.59999999999997V487.79999999999995M1022.2 489.0V490.2" fill="none" stroke="#4e4e4e" stroke-width="0.9" stroke-linecap="round" stroke-linejoin="round" /><path d="M1015.6 504.4V505.59999999999997M1015.6 506.8V508.0M1017.8 504.4V505.59999999999997M1017.8 506.8V508.0M1020 504.4V505.59999999999997M1020 506.8V508.0M1022.2 504.4V505.59999999999997M1022.2 506.8V508.0" fill="none" stroke="#4e4e4e" stroke-width="0.9" stroke-linecap="round" stroke-linejoin="round" /><path d="M1015.6 522.2V523.4M1015.6 524.6V525.8M1017.8 522.2V523.4M1017.8 524.6V525.8M1020 522.2V523.4M1020 524.6V525.8M1022.2 522.2V523.4M1022.2 524.6V525.8" fill="none" stroke="#4e4e4e" stroke-width="0.9" stroke-linecap="round" stroke-linejoin="round" /><circle cx="9.70" cy="497.90" r="4.6" fill="#e8e8e8" stroke="none" stroke-width="0.9" /><path d="M9.9 494.6V498L11.6 499.8" fill="none" stroke="#262626" stroke-width="1.1" stroke-linecap="round" stroke-linejoin="round" /><path d="M9.7 493.3A4.6 4.6 0 0 1 9.7 502.5A7 7 0 0 0 9.7 493.3Z" fill="#262626" opacity="0.0"/><circle cx="368.50" cy="497.90" r="3" fill="none" stroke="#b4b4b4" stroke-width="0.95" /><rect x="394.70" y="494.30" width="1.50" height="7.20" rx="0" fill="#ececec" stroke="none" stroke-width="0.9" /><path d="M401.4 494.3V501.5L396.8 497.9Z" fill="#ececec" /><path d="M409.3 494.7L412.3 497.9L409.3 501.1L406.3 497.9Z" fill="#ececec" /><path d="M416.9 495.6V500.2L414 497.9Z" fill="#ececec" /><path d="M429 493.9V501.9L422 497.9Z" fill="#ececec" /><path d="M435.7 493.9V501.9L442.3 497.9Z" fill="#ececec" /><path d="M447 495.6V500.2L449.9 497.9Z" fill="#ececec" /><path d="M454.7 494.7L457.7 497.9L454.7 501.1L451.7 497.9Z" fill="#ececec" /><path d="M462.6 494.3V501.5L466.9 497.9Z" fill="#ececec" /><rect x="467.30" y="494.30" width="1.60" height="7.20" rx="0" fill="#ececec" stroke="none" stroke-width="0.9" /><path d="M405.4 491.8V503.8M418.8 491.8V503.8M432.3 491.8V503.8M445.8 491.8V503.8M459.3 491.8V503.8" fill="none" stroke="#474747" stroke-width="0.7" stroke-linecap="round" stroke-linejoin="round" /><circle cx="722.90" cy="498.40" r="3.3" fill="none" stroke="#e0e0e0" stroke-width="0.95" /><path d="M721.6 493.6H724.2M722.9 493.8V495M722.9 498.4V496.4M725.6 495.4L726.4 494.6" fill="none" stroke="#e0e0e0" stroke-width="0.9" stroke-linecap="round" stroke-linejoin="round" /></svg><div class="a" style="left:15.30px;top:21.80px;width:156.50px;height:287.40px;background:#181818;border-radius:0 3.5px 3.5px 3.5px;box-shadow:0 1px 4px rgba(0,0,0,0.45);"></div><span class="t" style="left:37.70px;top:25.97px;"><u>N</u>uevo</span><span class="t s" style="right:862.80px;top:25.97px;">Ctrl N</span><svg style="left:0;top:0" width="1" height="1"><path d="M163.00 28.82L166.70 31.12L163.00 33.42Z" fill="#b0b0b0"/></svg><span class="t" style="left:37.70px;top:39.43px;"><u>A</u>brir...</span><span class="t s" style="right:862.80px;top:39.43px;">Ctrl O</span><span class="t" style="left:37.70px;top:52.88px;">Ab<u>r</u>ir reciente</span><span class="t s" style="right:862.80px;top:52.88px;">Mayús Ctrl O</span><svg style="left:0;top:0" width="1" height="1"><path d="M163.00 55.73L166.70 58.02L163.00 60.32Z" fill="#b0b0b0"/></svg><span class="t d" style="left:37.70px;top:66.32px;">Revertir</span><span class="t" style="left:37.70px;top:79.77px;">Rec<u>u</u>perar</span><svg style="left:0;top:0" width="1" height="1"><path d="M163.00 82.62L166.70 84.92L163.00 87.22Z" fill="#b0b0b0"/></svg><div class="a" style="left:19.30px;top:93.27px;width:148.70px;height:0.80px;background:#2c2c2c;"></div><span class="t" style="left:37.70px;top:97.67px;"><u>G</u>uardar</span><span class="t s" style="right:862.80px;top:97.67px;">Ctrl S</span><span class="t" style="left:37.70px;top:111.12px;">Guardar <u>c</u>omo...</span><span class="t s" style="right:862.80px;top:111.12px;">Mayús Ctrl S</span><span class="t" style="left:37.70px;top:124.58px;">Guardar c<u>o</u>pia...</span><span class="t d" style="left:37.70px;top:138.02px;">Guardar (<u>i</u>ncremental)</span><span class="t d" style="right:862.80px;top:138.02px;color:#505050">Ctrl Alt S</span><div class="a" style="left:19.30px;top:151.52px;width:148.70px;height:0.80px;background:#2c2c2c;"></div><span class="t" style="left:37.70px;top:155.92px;"><u>V</u>incular...</span><span class="t" style="left:37.70px;top:169.37px;">Ane<u>x</u>ar...</span><span class="t" style="left:37.70px;top:182.82px;"><u>P</u>revisualización de datos</span><svg style="left:0;top:0" width="1" height="1"><path d="M163.00 185.67L166.70 187.97L163.00 190.27Z" fill="#b0b0b0"/></svg><div class="a" style="left:19.30px;top:196.32px;width:148.70px;height:0.80px;background:#2c2c2c;"></div><div class="a" style="left:17.30px;top:199.57px;width:152.10px;height:12.20px;background:#3a3a3a;border-radius:2.5px;"></div><span class="t" style="left:37.70px;top:200.72px;">I<u>m</u>portar</span><svg style="left:0;top:0" width="1" height="1"><path d="M163.00 203.57L166.70 205.87L163.00 208.17Z" fill="#b0b0b0"/></svg><span class="t" style="left:37.70px;top:214.17px;"><u>E</u>xportar</span><svg style="left:0;top:0" width="1" height="1"><path d="M163.00 217.02L166.70 219.32L163.00 221.62Z" fill="#b0b0b0"/></svg><span class="t d" style="left:37.70px;top:227.62px;">Expo<u>r</u>tar todas las colecciones</span><div class="a" style="left:19.30px;top:241.12px;width:148.70px;height:0.80px;background:#2c2c2c;"></div><span class="t" style="left:37.70px;top:245.52px;"><u>D</u>atos externos</span><svg style="left:0;top:0" width="1" height="1"><path d="M163.00 248.37L166.70 250.67L163.00 252.97Z" fill="#b0b0b0"/></svg><span class="t" style="left:37.70px;top:258.97px;"><u>L</u>impiar</span><svg style="left:0;top:0" width="1" height="1"><path d="M163.00 261.82L166.70 264.12L163.00 266.42Z" fill="#b0b0b0"/></svg><div class="a" style="left:19.30px;top:272.47px;width:148.70px;height:0.80px;background:#2c2c2c;"></div><span class="t" style="left:37.70px;top:276.87px;">Prede<u>f</u>inidos</span><svg style="left:0;top:0" width="1" height="1"><path d="M163.00 279.72L166.70 282.02L163.00 284.32Z" fill="#b0b0b0"/></svg><div class="a" style="left:19.30px;top:290.37px;width:148.70px;height:0.80px;background:#2c2c2c;"></div><span class="t" style="left:37.70px;top:294.77px;"><u>S</u>alir</span><span class="t s" style="right:862.80px;top:294.77px;">Ctrl Q</span><div class="a" style="left:172.40px;top:196.60px;width:165.10px;height:166.50px;background:#181818;border-radius:3.5px;box-shadow:0 1px 4px rgba(0,0,0,0.45);"></div><span class="t" style="left:193.60px;top:200.20px;"><u>A</u>lembic (.abc)</span><span class="t" style="left:193.60px;top:213.75px;"><u>U</u>niversal Scene Description (.usd*)</span><span class="t" style="left:193.60px;top:227.30px;"><u>S</u>VG como Grease Pencil</span><span class="t" style="left:193.60px;top:240.85px;"><u>W</u>avefront (.obj)</span><span class="t" style="left:193.60px;top:254.40px;"><u>P</u>LY de Stanford (.ply)</span><span class="t" style="left:193.60px;top:267.95px;">S<u>T</u>L (.stl)</span><span class="t" style="left:193.60px;top:281.50px;"><u>F</u>BX (.fbx) (experimental)</span><span class="t" style="left:193.60px;top:295.05px;"><u>C</u>ollada (.dae) (antiguo)</span><span class="t" style="left:193.60px;top:308.60px;">Captura <u>d</u>e movimiento (.bvh)</span><span class="t" style="left:193.60px;top:322.15px;"><u>G</u>ráfico vectorial escalable (.svg)</span><span class="t" style="left:193.60px;top:335.70px;">F<u>B</u>X (.fbx)</span><div class="a" style="left:173.70px;top:348.10px;width:161.50px;height:12.20px;background:#3b3b3b;border-radius:2.5px;"></div><span class="t" style="left:193.60px;top:349.25px;">g<u>l</u>TF 2.0 (.glb/.gltf)</span><div class="a" style="left:224.30px;top:367.40px;width:113.60px;height:20.10px;background:#1b1b1b;border-radius:3px;box-shadow:0 1px 4px rgba(0,0,0,0.4);"></div><span class="t" style="left:232.60px;top:372.65px;">Cargar un archivo glTF 2.0.</span><svg style="left:0;top:0" width="1024" height="530" viewBox="0 0 1024 530"><path d="M25.2 28.5L23.2 30.5V35.7H30V32.6" fill="none" stroke="#dedede" stroke-width="0.9" stroke-linecap="round" stroke-linejoin="round" /><circle cx="30.00" cy="29.20" r="2.3" fill="#dedede" stroke="none" stroke-width="0.9" /><rect x="29.30" y="28.50" width="1.40" height="1.40" rx="0" fill="#181818" stroke="none" stroke-width="0.9" /><path d="M22.9 40.3H26.2L26.9 41.4H32.2V43.6H22.9Z" fill="#dedede" /><path d="M22.9 44.5H32.2V48.9H22.9Z" fill="#dedede" /><path d="M23.3 98.4H30.3L32.2 100.3V107.7H23.3Z" fill="none" stroke="#dedede" stroke-width="0.9" stroke-linecap="round" stroke-linejoin="round" /><path d="M25 98.4H29.3V102.5H25Z" fill="#dedede" /><rect x="27.60" y="99.10" width="1.00" height="2.20" rx="0" fill="#181818" stroke="none" stroke-width="0.9" /><g transform="translate(27.7 161.7) rotate(-45)"><rect x="-5.40" y="-1.65" width="5.90" height="3.30" rx="1.65" fill="none" stroke="#d4d4d4" stroke-width="0.85" /><rect x="-0.50" y="-1.65" width="5.90" height="3.30" rx="1.65" fill="none" stroke="#d4d4d4" stroke-width="0.85" /></g><g transform="translate(27.4 175.3) rotate(-45)"><path d="M3.6 -0.9H-2.2A1.9 1.9 0 0 0 -2.2 2.9H4A2.9 2.9 0 0 0 4 -2.9H-3.2" fill="none" stroke="#d4d4d4" stroke-width="0.85" stroke-linecap="round" stroke-linejoin="round" /></g><path d="M27.7 201.6V207.6M25 205.2L27.7 207.9L30.4 205.2M23.3 208.4V210.6H32.1V208.4" fill="none" stroke="#dedede" stroke-width="0.95" stroke-linecap="round" stroke-linejoin="round" /><path d="M27.7 221.6V215.6M25 218.2L27.7 215.5L30.4 218.2M23.3 221.5V223.8H32.1V221.5" fill="none" stroke="#dedede" stroke-width="0.95" stroke-linecap="round" stroke-linejoin="round" /><path d="M25.6 296.6A3.9 3.9 0 1 0 29.9 296.6M27.75 295V299.6" fill="none" stroke="#dedede" stroke-width="0.95" stroke-linecap="round" stroke-linejoin="round" /></svg></div></body></html>
